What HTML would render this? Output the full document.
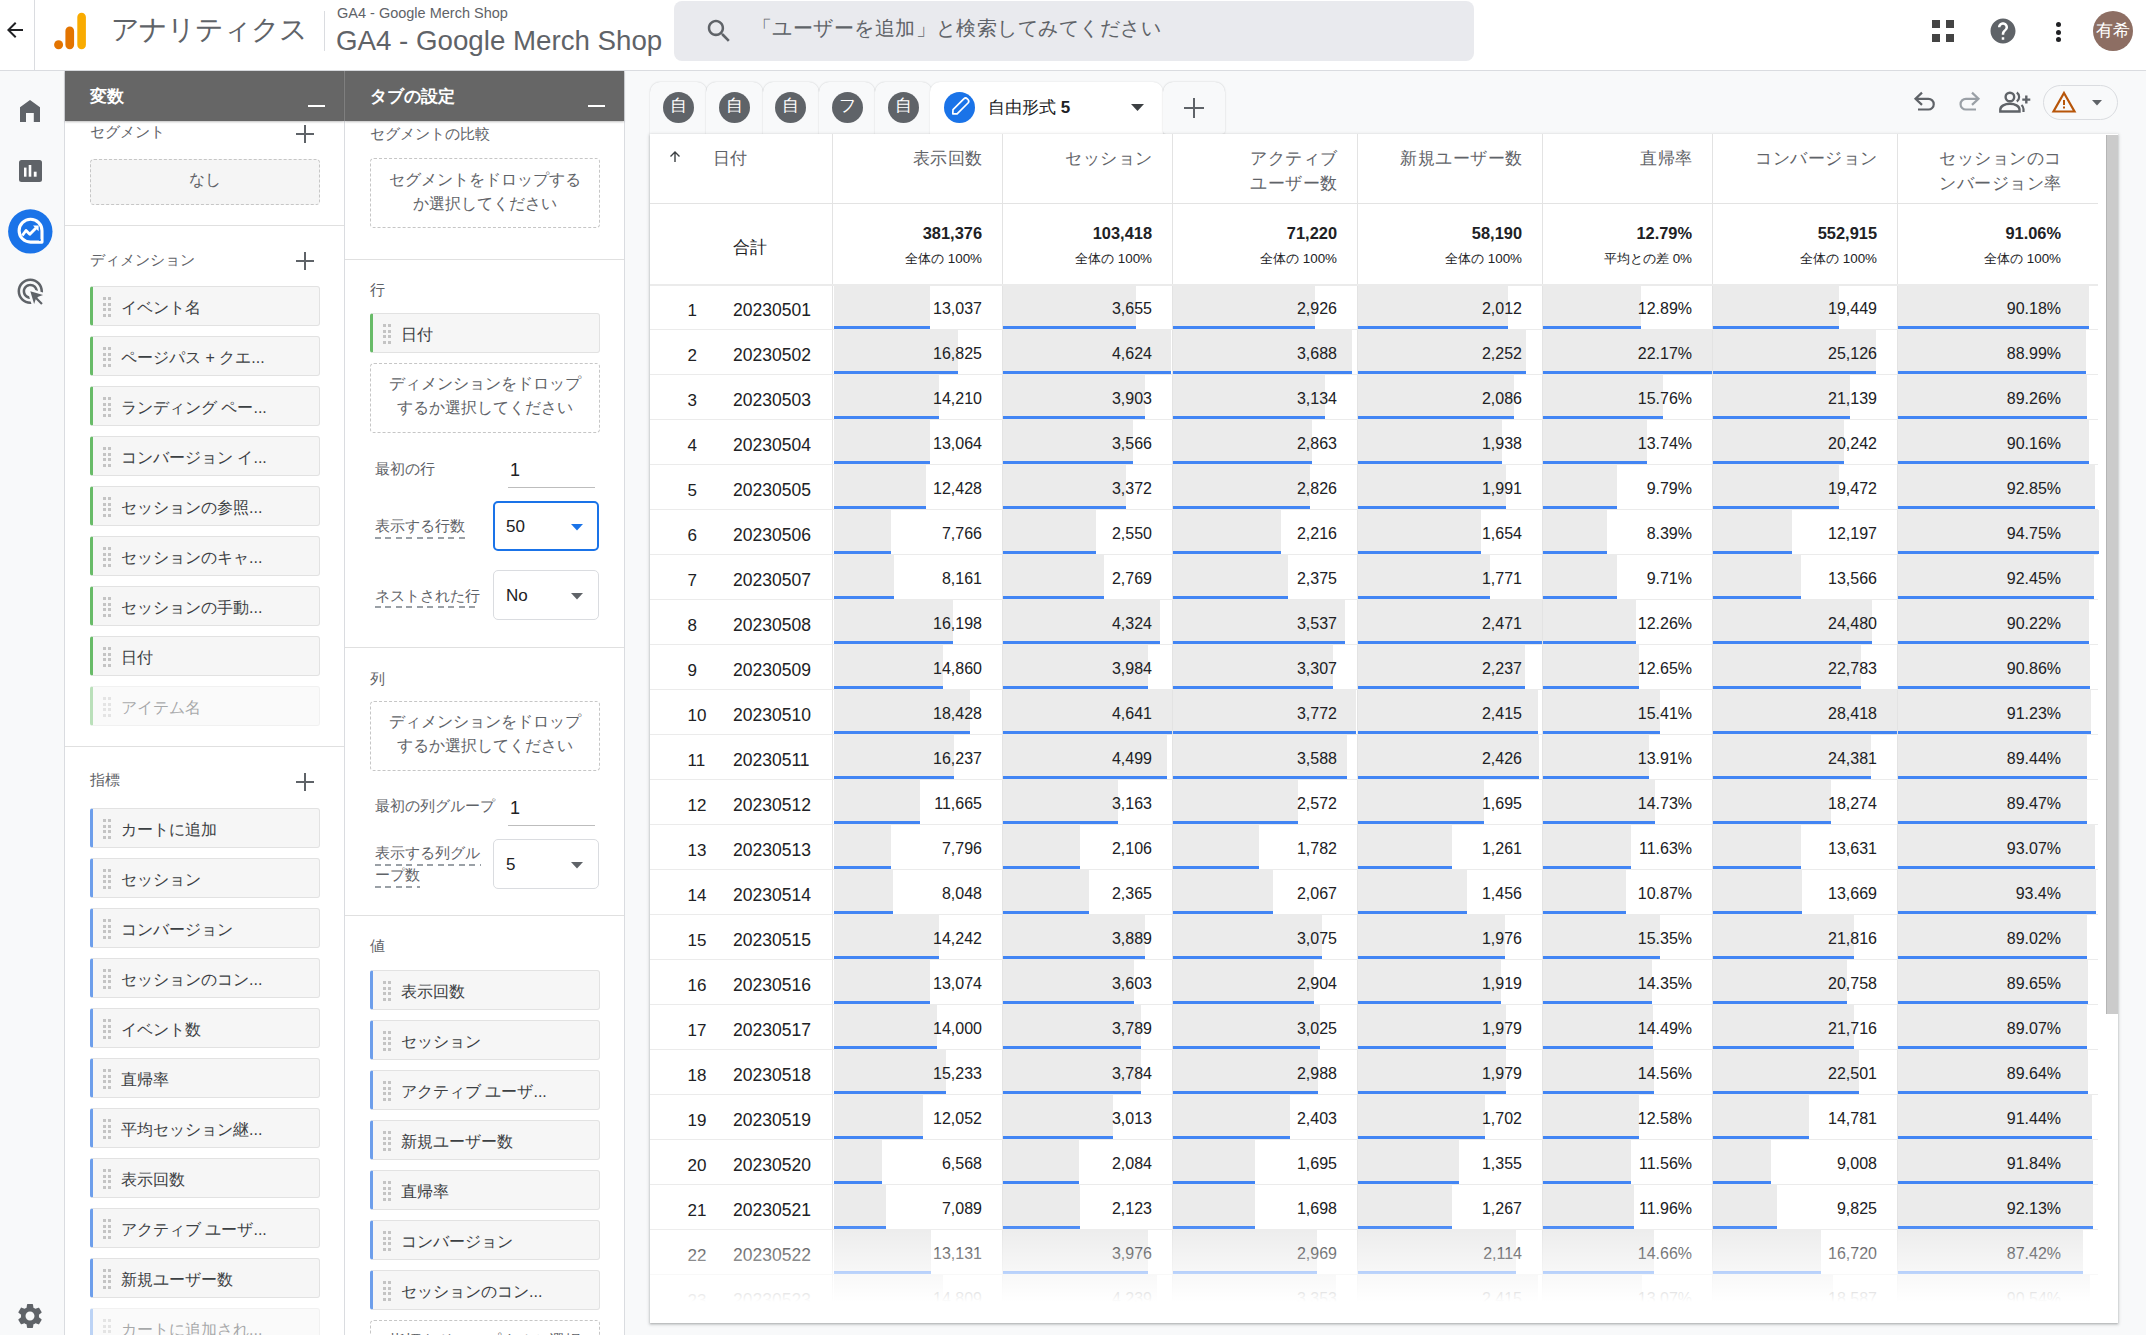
<!DOCTYPE html><html lang="ja"><head><meta charset="utf-8"><title>GA4</title><style>
*{box-sizing:border-box;margin:0;padding:0}
html,body{width:2146px;height:1335px;overflow:hidden}
body{background:#f8f9fa;font-family:"Liberation Sans",sans-serif;position:relative;color:#202124}
.a{position:absolute}
.t{position:absolute;white-space:nowrap;line-height:1}
svg{position:absolute;overflow:visible}
</style></head><body>
<div class="a" style="left:0;top:0;width:2146px;height:71px;background:#fff;border-bottom:1px solid #dadce0"></div>
<div class="a" style="left:34px;top:0;width:1px;height:70px;background:#dadce0"></div>
<svg style="left:3px;top:18px" width="24" height="24" viewBox="0 0 24 24"><path fill="#202124" d="M20 11H7.83l5.59-5.59L12 4l-8 8 8 8 1.41-1.41L7.83 13H20v-2z"/></svg>
<svg style="left:0;top:0" width="100" height="70"><circle cx="58.6" cy="44.8" r="4.5" fill="#e37400"/><rect x="65.4" y="26.6" width="8.7" height="22.6" rx="4.35" fill="#e37400"/><rect x="77.3" y="12.7" width="8.6" height="36.5" rx="4.3" fill="#f9ab00"/></svg>
<div class="t" style="left:111px;top:16px;font-size:28px;letter-spacing:-1px;color:#5f6368">アナリティクス</div>
<div class="a" style="left:324px;top:11px;width:1px;height:40px;background:#dadce0"></div>
<div class="t" style="left:337px;top:5.5px;font-size:14.5px;color:#5f6368">GA4 - Google Merch Shop</div>
<div class="t" style="left:336px;top:27.3px;font-size:27.7px;color:#5f6368">GA4 - Google Merch Shop</div>
<div class="a" style="left:674px;top:1px;width:800px;height:60px;border-radius:8px;background:#e9eaee"></div>
<svg style="left:703.7px;top:16.1px" width="30.2" height="30.2" viewBox="0 0 24 24"><path fill="#5f6368" d="M15.5 14h-.79l-.28-.27C15.41 12.59 16 11.11 16 9.5 16 5.91 13.09 3 9.5 3S3 5.91 3 9.5 5.91 16 9.5 16c1.61 0 3.09-.59 4.23-1.57l.27.28v.79l5 4.99L20.49 19l-4.99-5zm-6 0C7.01 14 5 11.99 5 9.5S7.01 5 9.5 5 14 7.01 14 9.5 11.99 14 9.5 14z"/></svg>
<div class="t" style="left:752px;top:18px;font-size:20px;letter-spacing:0.45px;color:#5f6368">「ユーザーを追加」と検索してみてください</div>
<div class="a" style="left:1932px;top:20px;width:8px;height:8px;background:#444"></div>
<div class="a" style="left:1946px;top:20px;width:8px;height:8px;background:#444"></div>
<div class="a" style="left:1932px;top:34px;width:8px;height:8px;background:#444"></div>
<div class="a" style="left:1946px;top:34px;width:8px;height:8px;background:#444"></div>
<svg style="left:1988px;top:16px" width="30" height="30" viewBox="0 0 24 24"><path fill="#5f6368" d="M12 2C6.48 2 2 6.48 2 12s4.48 10 10 10 10-4.48 10-10S17.52 2 12 2zm1 17h-2v-2h2v2zm2.07-7.750l-.9.92C13.45 12.9 13 13.5 13 15h-2v-.5c0-1.1.45-2.1 1.17-2.83l1.24-1.26c.37-.36.59-.86.59-1.41 0-1.1-.9-2-2-2s-2 .9-2 2H8c0-2.21 1.79-4 4-4s4 1.79 4 4c0 .88-.36 1.68-.93 2.25z"/></svg>
<div class="a" style="left:2055.5px;top:22.0px;width:5px;height:5px;border-radius:50%;background:#202124"></div>
<div class="a" style="left:2055.5px;top:29.5px;width:5px;height:5px;border-radius:50%;background:#202124"></div>
<div class="a" style="left:2055.5px;top:37.0px;width:5px;height:5px;border-radius:50%;background:#202124"></div>
<div class="a" style="left:2093px;top:11px;width:40px;height:40px;border-radius:50%;background:#8d6e63"></div>
<div class="t" style="left:2093px;top:22px;width:40px;text-align:center;font-size:17px;color:#fff">有希</div>
<svg style="left:0;top:0" width="64" height="1335"><path fill="#5f6368" d="M20 107.3L30 100L40 107.3V122H33.8V113H26V122H20Z"/><rect x="19" y="160" width="23" height="22" rx="2.5" fill="#5f6368"/><rect x="24" y="167.6" width="2.5" height="9.1" fill="#fff"/><rect x="28.7" y="165" width="2.6" height="11.7" fill="#fff"/><rect x="33.8" y="171.7" width="2.8" height="5" fill="#fff"/><circle cx="30.3" cy="231.4" r="22.2" fill="#1a73e8"/><path fill="none" stroke="#fff" stroke-width="3.1" stroke-linejoin="round" d="M42 230.7A11.4 11.4 0 0 0 30.5 219.3A11.4 11.4 0 0 0 19.1 230.7A11.4 11.4 0 0 0 30.5 242.1H42Z"/><circle cx="39.8" cy="240" r="1" fill="#1a73e8"/><path fill="none" stroke="#fff" stroke-width="2.9" stroke-linejoin="round" d="M22.3 235.5L26 230.5L29.8 234.2L36 228"/><path fill="#fff" d="M33 225.6H38.6V231.2Z"/></svg>
<svg style="left:14.85px;top:275.75px" width="30.6" height="30.6" viewBox="0 0 24 24"><path fill="#5f6368" d="M11.71 17.99C8.53 17.84 6 15.22 6 12c0-3.310 2.69-6 6-6 3.22 0 5.84 2.53 5.990 5.71l-2.1-.63C15.48 9.31 13.89 8 12 8c-2.21 0-4 1.79-4 4 0 1.89 1.31 3.48 3.08 3.89l.63 2.1zM22 12c0 .3-.01.6-.04.9l-1.97-.59c.01-.1.01-.21.01-.31 0-4.42-3.58-8-8-8s-8 3.58-8 8 3.58 8 8 8c.1 0 .21 0 .31-.01l.59 1.97c-.3.03-.6.04-.9.04-5.52 0-10-4.48-10-10S6.48 2 12 2s10 4.48 10 10zm-3.76 4.26L22 15l-10-3 3 10 1.26-3.76 4.270 4.27 1.22-1.22-4.27-4.27z"/></svg>
<svg style="left:15px;top:1300.5px" width="30" height="30" viewBox="0 0 24 24"><path fill="#5f6368" d="M19.14 12.94c.04-.3.06-.61.06-.94 0-.32-.02-.64-.07-.94l2.03-1.58c.18-.14.23-.41.12-.61l-1.92-3.32c-.12-.22-.37-.29-.59-.22l-2.39.96c-.5-.38-1.03-.7-1.62-.94l-.36-2.54c-.04-.24-.24-.41-.48-.41h-3.84c-.24 0-.43.17-.47.41l-.36 2.54c-.59.24-1.13.57-1.62.94l-2.39-.96c-.22-.08-.47 0-.59.22L2.74 8.87c-.12.21-.08.47.12.61l2.03 1.58c-.05.3-.09.63-.09.94s.02.64.07.94l-2.03 1.58c-.18.14-.23.41-.12.61l1.92 3.32c.12.22.37.29.59.22l2.39-.96c.5.38 1.03.7 1.62.94l.36 2.54c.05.24.24.41.48.41h3.84c.24 0 .44-.17.47-.41l.36-2.54c.59-.24 1.13-.56 1.62-.94l2.39.96c.22.08.47 0 .59-.22l1.92-3.32c.12-.22.07-.47-.12-.61l-2.01-1.58zM12 15.6c-1.98 0-3.6-1.62-3.6-3.6s1.62-3.6 3.6-3.6 3.6 1.62 3.6 3.6-1.62 3.6-3.6 3.6z"/></svg>
<div class="a" style="left:64px;top:71px;width:281px;height:1264px;background:#fff;border-left:1px solid #dadce0;border-right:1px solid #dadce0"></div>
<div class="a" style="left:345px;top:71px;width:280px;height:1264px;background:#fff;border-right:1px solid #dadce0"></div>
<div class="a" style="left:65px;top:71px;width:279px;height:50px;background:#666;box-shadow:0 1px 2px rgba(0,0,0,.25)"></div>
<div class="a" style="left:344px;top:71px;width:1px;height:50px;background:#8a8a8a"></div>
<div class="a" style="left:345px;top:71px;width:279px;height:50px;background:#666;box-shadow:0 1px 2px rgba(0,0,0,.25)"></div>
<div class="t" style="left:90px;top:88px;font-size:17px;font-weight:bold;color:#fff">変数</div>
<div class="t" style="left:370px;top:88px;font-size:17px;font-weight:bold;color:#fff">タブの設定</div>
<div class="a" style="left:308px;top:105px;width:17px;height:2px;background:#fff"></div>
<div class="a" style="left:588px;top:105px;width:17px;height:2px;background:#fff"></div>
<div class="t" style="left:90px;top:124px;font-size:15px;color:#5f6368">セグメント</div>
<div class="a" style="left:296px;top:133px;width:18px;height:2px;background:#5f6368"></div>
<div class="a" style="left:304px;top:125px;width:2px;height:18px;background:#5f6368"></div>
<div class="a" style="left:90px;top:159px;width:230px;height:46px;background:#f5f5f5;border:1px dashed #c6c6c6;border-radius:4px"></div>
<div class="t" style="left:90px;top:172px;width:230px;text-align:center;font-size:16px;color:#5f6368">なし</div>
<div class="a" style="left:65px;top:225px;width:279px;height:1px;background:#e0e0e0"></div>
<div class="t" style="left:90px;top:252px;font-size:15px;color:#5f6368">ディメンション</div>
<div class="a" style="left:296px;top:260px;width:18px;height:2px;background:#5f6368"></div>
<div class="a" style="left:304px;top:252px;width:2px;height:18px;background:#5f6368"></div>
<div class="a" style="left:90px;top:286px;width:230px;height:40px;"><div class="a" style="left:0;top:0;width:230px;height:40px;background:#f6f6f6;border:1px solid #e2e2e2;border-left:3px solid #68bb68;border-radius:3px"></div><div class="a" style="left:12.5px;top:11px;width:3px;height:3px;background:#c4c4c4"></div><div class="a" style="left:12.5px;top:16.7px;width:3px;height:3px;background:#c4c4c4"></div><div class="a" style="left:12.5px;top:22.3px;width:3px;height:3px;background:#c4c4c4"></div><div class="a" style="left:12.5px;top:28px;width:3px;height:3px;background:#c4c4c4"></div><div class="a" style="left:18px;top:11px;width:3px;height:3px;background:#c4c4c4"></div><div class="a" style="left:18px;top:16.7px;width:3px;height:3px;background:#c4c4c4"></div><div class="a" style="left:18px;top:22.3px;width:3px;height:3px;background:#c4c4c4"></div><div class="a" style="left:18px;top:28px;width:3px;height:3px;background:#c4c4c4"></div><div class="t" style="left:31px;top:14px;font-size:16px;color:#3c4043">イベント名</div></div>
<div class="a" style="left:90px;top:336px;width:230px;height:40px;"><div class="a" style="left:0;top:0;width:230px;height:40px;background:#f6f6f6;border:1px solid #e2e2e2;border-left:3px solid #68bb68;border-radius:3px"></div><div class="a" style="left:12.5px;top:11px;width:3px;height:3px;background:#c4c4c4"></div><div class="a" style="left:12.5px;top:16.7px;width:3px;height:3px;background:#c4c4c4"></div><div class="a" style="left:12.5px;top:22.3px;width:3px;height:3px;background:#c4c4c4"></div><div class="a" style="left:12.5px;top:28px;width:3px;height:3px;background:#c4c4c4"></div><div class="a" style="left:18px;top:11px;width:3px;height:3px;background:#c4c4c4"></div><div class="a" style="left:18px;top:16.7px;width:3px;height:3px;background:#c4c4c4"></div><div class="a" style="left:18px;top:22.3px;width:3px;height:3px;background:#c4c4c4"></div><div class="a" style="left:18px;top:28px;width:3px;height:3px;background:#c4c4c4"></div><div class="t" style="left:31px;top:14px;font-size:16px;color:#3c4043">ページパス + クエ...</div></div>
<div class="a" style="left:90px;top:386px;width:230px;height:40px;"><div class="a" style="left:0;top:0;width:230px;height:40px;background:#f6f6f6;border:1px solid #e2e2e2;border-left:3px solid #68bb68;border-radius:3px"></div><div class="a" style="left:12.5px;top:11px;width:3px;height:3px;background:#c4c4c4"></div><div class="a" style="left:12.5px;top:16.7px;width:3px;height:3px;background:#c4c4c4"></div><div class="a" style="left:12.5px;top:22.3px;width:3px;height:3px;background:#c4c4c4"></div><div class="a" style="left:12.5px;top:28px;width:3px;height:3px;background:#c4c4c4"></div><div class="a" style="left:18px;top:11px;width:3px;height:3px;background:#c4c4c4"></div><div class="a" style="left:18px;top:16.7px;width:3px;height:3px;background:#c4c4c4"></div><div class="a" style="left:18px;top:22.3px;width:3px;height:3px;background:#c4c4c4"></div><div class="a" style="left:18px;top:28px;width:3px;height:3px;background:#c4c4c4"></div><div class="t" style="left:31px;top:14px;font-size:16px;color:#3c4043">ランディング ペー...</div></div>
<div class="a" style="left:90px;top:436px;width:230px;height:40px;"><div class="a" style="left:0;top:0;width:230px;height:40px;background:#f6f6f6;border:1px solid #e2e2e2;border-left:3px solid #68bb68;border-radius:3px"></div><div class="a" style="left:12.5px;top:11px;width:3px;height:3px;background:#c4c4c4"></div><div class="a" style="left:12.5px;top:16.7px;width:3px;height:3px;background:#c4c4c4"></div><div class="a" style="left:12.5px;top:22.3px;width:3px;height:3px;background:#c4c4c4"></div><div class="a" style="left:12.5px;top:28px;width:3px;height:3px;background:#c4c4c4"></div><div class="a" style="left:18px;top:11px;width:3px;height:3px;background:#c4c4c4"></div><div class="a" style="left:18px;top:16.7px;width:3px;height:3px;background:#c4c4c4"></div><div class="a" style="left:18px;top:22.3px;width:3px;height:3px;background:#c4c4c4"></div><div class="a" style="left:18px;top:28px;width:3px;height:3px;background:#c4c4c4"></div><div class="t" style="left:31px;top:14px;font-size:16px;color:#3c4043">コンバージョン イ...</div></div>
<div class="a" style="left:90px;top:486px;width:230px;height:40px;"><div class="a" style="left:0;top:0;width:230px;height:40px;background:#f6f6f6;border:1px solid #e2e2e2;border-left:3px solid #68bb68;border-radius:3px"></div><div class="a" style="left:12.5px;top:11px;width:3px;height:3px;background:#c4c4c4"></div><div class="a" style="left:12.5px;top:16.7px;width:3px;height:3px;background:#c4c4c4"></div><div class="a" style="left:12.5px;top:22.3px;width:3px;height:3px;background:#c4c4c4"></div><div class="a" style="left:12.5px;top:28px;width:3px;height:3px;background:#c4c4c4"></div><div class="a" style="left:18px;top:11px;width:3px;height:3px;background:#c4c4c4"></div><div class="a" style="left:18px;top:16.7px;width:3px;height:3px;background:#c4c4c4"></div><div class="a" style="left:18px;top:22.3px;width:3px;height:3px;background:#c4c4c4"></div><div class="a" style="left:18px;top:28px;width:3px;height:3px;background:#c4c4c4"></div><div class="t" style="left:31px;top:14px;font-size:16px;color:#3c4043">セッションの参照...</div></div>
<div class="a" style="left:90px;top:536px;width:230px;height:40px;"><div class="a" style="left:0;top:0;width:230px;height:40px;background:#f6f6f6;border:1px solid #e2e2e2;border-left:3px solid #68bb68;border-radius:3px"></div><div class="a" style="left:12.5px;top:11px;width:3px;height:3px;background:#c4c4c4"></div><div class="a" style="left:12.5px;top:16.7px;width:3px;height:3px;background:#c4c4c4"></div><div class="a" style="left:12.5px;top:22.3px;width:3px;height:3px;background:#c4c4c4"></div><div class="a" style="left:12.5px;top:28px;width:3px;height:3px;background:#c4c4c4"></div><div class="a" style="left:18px;top:11px;width:3px;height:3px;background:#c4c4c4"></div><div class="a" style="left:18px;top:16.7px;width:3px;height:3px;background:#c4c4c4"></div><div class="a" style="left:18px;top:22.3px;width:3px;height:3px;background:#c4c4c4"></div><div class="a" style="left:18px;top:28px;width:3px;height:3px;background:#c4c4c4"></div><div class="t" style="left:31px;top:14px;font-size:16px;color:#3c4043">セッションのキャ...</div></div>
<div class="a" style="left:90px;top:586px;width:230px;height:40px;"><div class="a" style="left:0;top:0;width:230px;height:40px;background:#f6f6f6;border:1px solid #e2e2e2;border-left:3px solid #68bb68;border-radius:3px"></div><div class="a" style="left:12.5px;top:11px;width:3px;height:3px;background:#c4c4c4"></div><div class="a" style="left:12.5px;top:16.7px;width:3px;height:3px;background:#c4c4c4"></div><div class="a" style="left:12.5px;top:22.3px;width:3px;height:3px;background:#c4c4c4"></div><div class="a" style="left:12.5px;top:28px;width:3px;height:3px;background:#c4c4c4"></div><div class="a" style="left:18px;top:11px;width:3px;height:3px;background:#c4c4c4"></div><div class="a" style="left:18px;top:16.7px;width:3px;height:3px;background:#c4c4c4"></div><div class="a" style="left:18px;top:22.3px;width:3px;height:3px;background:#c4c4c4"></div><div class="a" style="left:18px;top:28px;width:3px;height:3px;background:#c4c4c4"></div><div class="t" style="left:31px;top:14px;font-size:16px;color:#3c4043">セッションの手動...</div></div>
<div class="a" style="left:90px;top:636px;width:230px;height:40px;"><div class="a" style="left:0;top:0;width:230px;height:40px;background:#f6f6f6;border:1px solid #e2e2e2;border-left:3px solid #68bb68;border-radius:3px"></div><div class="a" style="left:12.5px;top:11px;width:3px;height:3px;background:#c4c4c4"></div><div class="a" style="left:12.5px;top:16.7px;width:3px;height:3px;background:#c4c4c4"></div><div class="a" style="left:12.5px;top:22.3px;width:3px;height:3px;background:#c4c4c4"></div><div class="a" style="left:12.5px;top:28px;width:3px;height:3px;background:#c4c4c4"></div><div class="a" style="left:18px;top:11px;width:3px;height:3px;background:#c4c4c4"></div><div class="a" style="left:18px;top:16.7px;width:3px;height:3px;background:#c4c4c4"></div><div class="a" style="left:18px;top:22.3px;width:3px;height:3px;background:#c4c4c4"></div><div class="a" style="left:18px;top:28px;width:3px;height:3px;background:#c4c4c4"></div><div class="t" style="left:31px;top:14px;font-size:16px;color:#3c4043">日付</div></div>
<div class="a" style="left:90px;top:686px;width:230px;height:40px;opacity:0.45;"><div class="a" style="left:0;top:0;width:230px;height:40px;background:#f6f6f6;border:1px solid #e2e2e2;border-left:3px solid #68bb68;border-radius:3px"></div><div class="a" style="left:12.5px;top:11px;width:3px;height:3px;background:#c4c4c4"></div><div class="a" style="left:12.5px;top:16.7px;width:3px;height:3px;background:#c4c4c4"></div><div class="a" style="left:12.5px;top:22.3px;width:3px;height:3px;background:#c4c4c4"></div><div class="a" style="left:12.5px;top:28px;width:3px;height:3px;background:#c4c4c4"></div><div class="a" style="left:18px;top:11px;width:3px;height:3px;background:#c4c4c4"></div><div class="a" style="left:18px;top:16.7px;width:3px;height:3px;background:#c4c4c4"></div><div class="a" style="left:18px;top:22.3px;width:3px;height:3px;background:#c4c4c4"></div><div class="a" style="left:18px;top:28px;width:3px;height:3px;background:#c4c4c4"></div><div class="t" style="left:31px;top:14px;font-size:16px;color:#3c4043">アイテム名</div></div>
<div class="a" style="left:65px;top:746px;width:279px;height:1px;background:#e0e0e0"></div>
<div class="t" style="left:90px;top:772px;font-size:15px;color:#5f6368">指標</div>
<div class="a" style="left:296px;top:781px;width:18px;height:2px;background:#5f6368"></div>
<div class="a" style="left:304px;top:773px;width:2px;height:18px;background:#5f6368"></div>
<div class="a" style="left:90px;top:808px;width:230px;height:40px;"><div class="a" style="left:0;top:0;width:230px;height:40px;background:#f6f6f6;border:1px solid #e2e2e2;border-left:3px solid #6d9eeb;border-radius:3px"></div><div class="a" style="left:12.5px;top:11px;width:3px;height:3px;background:#c4c4c4"></div><div class="a" style="left:12.5px;top:16.7px;width:3px;height:3px;background:#c4c4c4"></div><div class="a" style="left:12.5px;top:22.3px;width:3px;height:3px;background:#c4c4c4"></div><div class="a" style="left:12.5px;top:28px;width:3px;height:3px;background:#c4c4c4"></div><div class="a" style="left:18px;top:11px;width:3px;height:3px;background:#c4c4c4"></div><div class="a" style="left:18px;top:16.7px;width:3px;height:3px;background:#c4c4c4"></div><div class="a" style="left:18px;top:22.3px;width:3px;height:3px;background:#c4c4c4"></div><div class="a" style="left:18px;top:28px;width:3px;height:3px;background:#c4c4c4"></div><div class="t" style="left:31px;top:14px;font-size:16px;color:#3c4043">カートに追加</div></div>
<div class="a" style="left:90px;top:858px;width:230px;height:40px;"><div class="a" style="left:0;top:0;width:230px;height:40px;background:#f6f6f6;border:1px solid #e2e2e2;border-left:3px solid #6d9eeb;border-radius:3px"></div><div class="a" style="left:12.5px;top:11px;width:3px;height:3px;background:#c4c4c4"></div><div class="a" style="left:12.5px;top:16.7px;width:3px;height:3px;background:#c4c4c4"></div><div class="a" style="left:12.5px;top:22.3px;width:3px;height:3px;background:#c4c4c4"></div><div class="a" style="left:12.5px;top:28px;width:3px;height:3px;background:#c4c4c4"></div><div class="a" style="left:18px;top:11px;width:3px;height:3px;background:#c4c4c4"></div><div class="a" style="left:18px;top:16.7px;width:3px;height:3px;background:#c4c4c4"></div><div class="a" style="left:18px;top:22.3px;width:3px;height:3px;background:#c4c4c4"></div><div class="a" style="left:18px;top:28px;width:3px;height:3px;background:#c4c4c4"></div><div class="t" style="left:31px;top:14px;font-size:16px;color:#3c4043">セッション</div></div>
<div class="a" style="left:90px;top:908px;width:230px;height:40px;"><div class="a" style="left:0;top:0;width:230px;height:40px;background:#f6f6f6;border:1px solid #e2e2e2;border-left:3px solid #6d9eeb;border-radius:3px"></div><div class="a" style="left:12.5px;top:11px;width:3px;height:3px;background:#c4c4c4"></div><div class="a" style="left:12.5px;top:16.7px;width:3px;height:3px;background:#c4c4c4"></div><div class="a" style="left:12.5px;top:22.3px;width:3px;height:3px;background:#c4c4c4"></div><div class="a" style="left:12.5px;top:28px;width:3px;height:3px;background:#c4c4c4"></div><div class="a" style="left:18px;top:11px;width:3px;height:3px;background:#c4c4c4"></div><div class="a" style="left:18px;top:16.7px;width:3px;height:3px;background:#c4c4c4"></div><div class="a" style="left:18px;top:22.3px;width:3px;height:3px;background:#c4c4c4"></div><div class="a" style="left:18px;top:28px;width:3px;height:3px;background:#c4c4c4"></div><div class="t" style="left:31px;top:14px;font-size:16px;color:#3c4043">コンバージョン</div></div>
<div class="a" style="left:90px;top:958px;width:230px;height:40px;"><div class="a" style="left:0;top:0;width:230px;height:40px;background:#f6f6f6;border:1px solid #e2e2e2;border-left:3px solid #6d9eeb;border-radius:3px"></div><div class="a" style="left:12.5px;top:11px;width:3px;height:3px;background:#c4c4c4"></div><div class="a" style="left:12.5px;top:16.7px;width:3px;height:3px;background:#c4c4c4"></div><div class="a" style="left:12.5px;top:22.3px;width:3px;height:3px;background:#c4c4c4"></div><div class="a" style="left:12.5px;top:28px;width:3px;height:3px;background:#c4c4c4"></div><div class="a" style="left:18px;top:11px;width:3px;height:3px;background:#c4c4c4"></div><div class="a" style="left:18px;top:16.7px;width:3px;height:3px;background:#c4c4c4"></div><div class="a" style="left:18px;top:22.3px;width:3px;height:3px;background:#c4c4c4"></div><div class="a" style="left:18px;top:28px;width:3px;height:3px;background:#c4c4c4"></div><div class="t" style="left:31px;top:14px;font-size:16px;color:#3c4043">セッションのコン...</div></div>
<div class="a" style="left:90px;top:1008px;width:230px;height:40px;"><div class="a" style="left:0;top:0;width:230px;height:40px;background:#f6f6f6;border:1px solid #e2e2e2;border-left:3px solid #6d9eeb;border-radius:3px"></div><div class="a" style="left:12.5px;top:11px;width:3px;height:3px;background:#c4c4c4"></div><div class="a" style="left:12.5px;top:16.7px;width:3px;height:3px;background:#c4c4c4"></div><div class="a" style="left:12.5px;top:22.3px;width:3px;height:3px;background:#c4c4c4"></div><div class="a" style="left:12.5px;top:28px;width:3px;height:3px;background:#c4c4c4"></div><div class="a" style="left:18px;top:11px;width:3px;height:3px;background:#c4c4c4"></div><div class="a" style="left:18px;top:16.7px;width:3px;height:3px;background:#c4c4c4"></div><div class="a" style="left:18px;top:22.3px;width:3px;height:3px;background:#c4c4c4"></div><div class="a" style="left:18px;top:28px;width:3px;height:3px;background:#c4c4c4"></div><div class="t" style="left:31px;top:14px;font-size:16px;color:#3c4043">イベント数</div></div>
<div class="a" style="left:90px;top:1058px;width:230px;height:40px;"><div class="a" style="left:0;top:0;width:230px;height:40px;background:#f6f6f6;border:1px solid #e2e2e2;border-left:3px solid #6d9eeb;border-radius:3px"></div><div class="a" style="left:12.5px;top:11px;width:3px;height:3px;background:#c4c4c4"></div><div class="a" style="left:12.5px;top:16.7px;width:3px;height:3px;background:#c4c4c4"></div><div class="a" style="left:12.5px;top:22.3px;width:3px;height:3px;background:#c4c4c4"></div><div class="a" style="left:12.5px;top:28px;width:3px;height:3px;background:#c4c4c4"></div><div class="a" style="left:18px;top:11px;width:3px;height:3px;background:#c4c4c4"></div><div class="a" style="left:18px;top:16.7px;width:3px;height:3px;background:#c4c4c4"></div><div class="a" style="left:18px;top:22.3px;width:3px;height:3px;background:#c4c4c4"></div><div class="a" style="left:18px;top:28px;width:3px;height:3px;background:#c4c4c4"></div><div class="t" style="left:31px;top:14px;font-size:16px;color:#3c4043">直帰率</div></div>
<div class="a" style="left:90px;top:1108px;width:230px;height:40px;"><div class="a" style="left:0;top:0;width:230px;height:40px;background:#f6f6f6;border:1px solid #e2e2e2;border-left:3px solid #6d9eeb;border-radius:3px"></div><div class="a" style="left:12.5px;top:11px;width:3px;height:3px;background:#c4c4c4"></div><div class="a" style="left:12.5px;top:16.7px;width:3px;height:3px;background:#c4c4c4"></div><div class="a" style="left:12.5px;top:22.3px;width:3px;height:3px;background:#c4c4c4"></div><div class="a" style="left:12.5px;top:28px;width:3px;height:3px;background:#c4c4c4"></div><div class="a" style="left:18px;top:11px;width:3px;height:3px;background:#c4c4c4"></div><div class="a" style="left:18px;top:16.7px;width:3px;height:3px;background:#c4c4c4"></div><div class="a" style="left:18px;top:22.3px;width:3px;height:3px;background:#c4c4c4"></div><div class="a" style="left:18px;top:28px;width:3px;height:3px;background:#c4c4c4"></div><div class="t" style="left:31px;top:14px;font-size:16px;color:#3c4043">平均セッション継...</div></div>
<div class="a" style="left:90px;top:1158px;width:230px;height:40px;"><div class="a" style="left:0;top:0;width:230px;height:40px;background:#f6f6f6;border:1px solid #e2e2e2;border-left:3px solid #6d9eeb;border-radius:3px"></div><div class="a" style="left:12.5px;top:11px;width:3px;height:3px;background:#c4c4c4"></div><div class="a" style="left:12.5px;top:16.7px;width:3px;height:3px;background:#c4c4c4"></div><div class="a" style="left:12.5px;top:22.3px;width:3px;height:3px;background:#c4c4c4"></div><div class="a" style="left:12.5px;top:28px;width:3px;height:3px;background:#c4c4c4"></div><div class="a" style="left:18px;top:11px;width:3px;height:3px;background:#c4c4c4"></div><div class="a" style="left:18px;top:16.7px;width:3px;height:3px;background:#c4c4c4"></div><div class="a" style="left:18px;top:22.3px;width:3px;height:3px;background:#c4c4c4"></div><div class="a" style="left:18px;top:28px;width:3px;height:3px;background:#c4c4c4"></div><div class="t" style="left:31px;top:14px;font-size:16px;color:#3c4043">表示回数</div></div>
<div class="a" style="left:90px;top:1208px;width:230px;height:40px;"><div class="a" style="left:0;top:0;width:230px;height:40px;background:#f6f6f6;border:1px solid #e2e2e2;border-left:3px solid #6d9eeb;border-radius:3px"></div><div class="a" style="left:12.5px;top:11px;width:3px;height:3px;background:#c4c4c4"></div><div class="a" style="left:12.5px;top:16.7px;width:3px;height:3px;background:#c4c4c4"></div><div class="a" style="left:12.5px;top:22.3px;width:3px;height:3px;background:#c4c4c4"></div><div class="a" style="left:12.5px;top:28px;width:3px;height:3px;background:#c4c4c4"></div><div class="a" style="left:18px;top:11px;width:3px;height:3px;background:#c4c4c4"></div><div class="a" style="left:18px;top:16.7px;width:3px;height:3px;background:#c4c4c4"></div><div class="a" style="left:18px;top:22.3px;width:3px;height:3px;background:#c4c4c4"></div><div class="a" style="left:18px;top:28px;width:3px;height:3px;background:#c4c4c4"></div><div class="t" style="left:31px;top:14px;font-size:16px;color:#3c4043">アクティブ ユーザ...</div></div>
<div class="a" style="left:90px;top:1258px;width:230px;height:40px;"><div class="a" style="left:0;top:0;width:230px;height:40px;background:#f6f6f6;border:1px solid #e2e2e2;border-left:3px solid #6d9eeb;border-radius:3px"></div><div class="a" style="left:12.5px;top:11px;width:3px;height:3px;background:#c4c4c4"></div><div class="a" style="left:12.5px;top:16.7px;width:3px;height:3px;background:#c4c4c4"></div><div class="a" style="left:12.5px;top:22.3px;width:3px;height:3px;background:#c4c4c4"></div><div class="a" style="left:12.5px;top:28px;width:3px;height:3px;background:#c4c4c4"></div><div class="a" style="left:18px;top:11px;width:3px;height:3px;background:#c4c4c4"></div><div class="a" style="left:18px;top:16.7px;width:3px;height:3px;background:#c4c4c4"></div><div class="a" style="left:18px;top:22.3px;width:3px;height:3px;background:#c4c4c4"></div><div class="a" style="left:18px;top:28px;width:3px;height:3px;background:#c4c4c4"></div><div class="t" style="left:31px;top:14px;font-size:16px;color:#3c4043">新規ユーザー数</div></div>
<div class="a" style="left:90px;top:1308px;width:230px;height:40px;opacity:0.45;"><div class="a" style="left:0;top:0;width:230px;height:40px;background:#f6f6f6;border:1px solid #e2e2e2;border-left:3px solid #6d9eeb;border-radius:3px"></div><div class="a" style="left:12.5px;top:11px;width:3px;height:3px;background:#c4c4c4"></div><div class="a" style="left:12.5px;top:16.7px;width:3px;height:3px;background:#c4c4c4"></div><div class="a" style="left:12.5px;top:22.3px;width:3px;height:3px;background:#c4c4c4"></div><div class="a" style="left:12.5px;top:28px;width:3px;height:3px;background:#c4c4c4"></div><div class="a" style="left:18px;top:11px;width:3px;height:3px;background:#c4c4c4"></div><div class="a" style="left:18px;top:16.7px;width:3px;height:3px;background:#c4c4c4"></div><div class="a" style="left:18px;top:22.3px;width:3px;height:3px;background:#c4c4c4"></div><div class="a" style="left:18px;top:28px;width:3px;height:3px;background:#c4c4c4"></div><div class="t" style="left:31px;top:14px;font-size:16px;color:#3c4043">カートに追加され...</div></div>
<div class="t" style="left:370px;top:126px;font-size:15px;color:#5f6368">セグメントの比較</div>
<div class="a" style="left:370px;top:158px;width:230px;height:70px;background:#fff;border:1px dashed #c6c6c6;border-radius:4px"></div>
<div class="t" style="left:370px;top:172px;width:230px;text-align:center;font-size:16px;color:#5f6368">セグメントをドロップする</div>
<div class="t" style="left:370px;top:196px;width:230px;text-align:center;font-size:16px;color:#5f6368">か選択してください</div>
<div class="a" style="left:345px;top:259px;width:279px;height:1px;background:#e0e0e0"></div>
<div class="t" style="left:370px;top:282px;font-size:15px;color:#5f6368">行</div>
<div class="a" style="left:370px;top:313px;width:230px;height:40px;"><div class="a" style="left:0;top:0;width:230px;height:40px;background:#f6f6f6;border:1px solid #e2e2e2;border-left:3px solid #68bb68;border-radius:3px"></div><div class="a" style="left:12.5px;top:11px;width:3px;height:3px;background:#c4c4c4"></div><div class="a" style="left:12.5px;top:16.7px;width:3px;height:3px;background:#c4c4c4"></div><div class="a" style="left:12.5px;top:22.3px;width:3px;height:3px;background:#c4c4c4"></div><div class="a" style="left:12.5px;top:28px;width:3px;height:3px;background:#c4c4c4"></div><div class="a" style="left:18px;top:11px;width:3px;height:3px;background:#c4c4c4"></div><div class="a" style="left:18px;top:16.7px;width:3px;height:3px;background:#c4c4c4"></div><div class="a" style="left:18px;top:22.3px;width:3px;height:3px;background:#c4c4c4"></div><div class="a" style="left:18px;top:28px;width:3px;height:3px;background:#c4c4c4"></div><div class="t" style="left:31px;top:14px;font-size:16px;color:#3c4043">日付</div></div>
<div class="a" style="left:370px;top:363px;width:230px;height:70px;background:#fff;border:1px dashed #c6c6c6;border-radius:4px"></div>
<div class="t" style="left:370px;top:376px;width:230px;text-align:center;font-size:16px;color:#5f6368">ディメンションをドロップ</div>
<div class="t" style="left:370px;top:400px;width:230px;text-align:center;font-size:16px;color:#5f6368">するか選択してください</div>
<div class="t" style="left:375px;top:461px;font-size:15px;color:#5f6368">最初の行</div>
<div class="t" style="left:510px;top:461px;font-size:18px;color:#202124">1</div>
<div class="a" style="left:508px;top:487px;width:87px;height:1px;background:#bdbdbd"></div>
<div class="t" style="left:375px;top:518px;font-size:15px;color:#5f6368">表示する行数</div>
<div class="a" style="left:375px;top:537px;width:90px;height:2px;background:repeating-linear-gradient(90deg,#9aa0a6 0 6px,transparent 6px 10.5px)"></div>
<div class="a" style="left:493px;top:501px;width:106px;height:50px;border:2px solid #1a73e8;border-radius:5px;background:#fff"></div>
<div class="t" style="left:506px;top:518px;font-size:17px;color:#202124">50</div>
<svg style="left:571px;top:524px" width="12" height="7"><path d="M0 0H12L6 6.5Z" fill="#1a73e8"/></svg>
<div class="t" style="left:375px;top:588px;font-size:15px;color:#5f6368">ネストされた行</div>
<div class="a" style="left:375px;top:606px;width:105px;height:2px;background:repeating-linear-gradient(90deg,#9aa0a6 0 6px,transparent 6px 10.5px)"></div>
<div class="a" style="left:493px;top:570px;width:106px;height:50px;border:1px solid #dadce0;border-radius:5px;background:#fff"></div>
<div class="t" style="left:506px;top:587px;font-size:17px;color:#202124">No</div>
<svg style="left:571px;top:593px" width="12" height="7"><path d="M0 0H12L6 6.5Z" fill="#5f6368"/></svg>
<div class="a" style="left:345px;top:647px;width:279px;height:1px;background:#e0e0e0"></div>
<div class="t" style="left:370px;top:671px;font-size:15px;color:#5f6368">列</div>
<div class="a" style="left:370px;top:701px;width:230px;height:70px;background:#fff;border:1px dashed #c6c6c6;border-radius:4px"></div>
<div class="t" style="left:370px;top:714px;width:230px;text-align:center;font-size:16px;color:#5f6368">ディメンションをドロップ</div>
<div class="t" style="left:370px;top:738px;width:230px;text-align:center;font-size:16px;color:#5f6368">するか選択してください</div>
<div class="t" style="left:375px;top:798px;font-size:15px;color:#5f6368">最初の列グループ</div>
<div class="t" style="left:510px;top:799px;font-size:18px;color:#202124">1</div>
<div class="a" style="left:508px;top:825px;width:87px;height:1px;background:#bdbdbd"></div>
<div class="t" style="left:375px;top:845px;font-size:15px;color:#5f6368">表示する列グル</div>
<div class="a" style="left:375px;top:864px;width:106px;height:2px;background:repeating-linear-gradient(90deg,#9aa0a6 0 6px,transparent 6px 10.5px)"></div>
<div class="t" style="left:375px;top:867px;font-size:15px;color:#5f6368">ープ数</div>
<div class="a" style="left:375px;top:886px;width:45px;height:2px;background:repeating-linear-gradient(90deg,#9aa0a6 0 6px,transparent 6px 10.5px)"></div>
<div class="a" style="left:493px;top:839px;width:106px;height:50px;border:1px solid #dadce0;border-radius:5px;background:#fff"></div>
<div class="t" style="left:506px;top:856px;font-size:17px;color:#202124">5</div>
<svg style="left:571px;top:862px" width="12" height="7"><path d="M0 0H12L6 6.5Z" fill="#5f6368"/></svg>
<div class="a" style="left:345px;top:915px;width:279px;height:1px;background:#e0e0e0"></div>
<div class="t" style="left:370px;top:938px;font-size:15px;color:#5f6368">値</div>
<div class="a" style="left:370px;top:970px;width:230px;height:40px;"><div class="a" style="left:0;top:0;width:230px;height:40px;background:#f6f6f6;border:1px solid #e2e2e2;border-left:3px solid #6d9eeb;border-radius:3px"></div><div class="a" style="left:12.5px;top:11px;width:3px;height:3px;background:#c4c4c4"></div><div class="a" style="left:12.5px;top:16.7px;width:3px;height:3px;background:#c4c4c4"></div><div class="a" style="left:12.5px;top:22.3px;width:3px;height:3px;background:#c4c4c4"></div><div class="a" style="left:12.5px;top:28px;width:3px;height:3px;background:#c4c4c4"></div><div class="a" style="left:18px;top:11px;width:3px;height:3px;background:#c4c4c4"></div><div class="a" style="left:18px;top:16.7px;width:3px;height:3px;background:#c4c4c4"></div><div class="a" style="left:18px;top:22.3px;width:3px;height:3px;background:#c4c4c4"></div><div class="a" style="left:18px;top:28px;width:3px;height:3px;background:#c4c4c4"></div><div class="t" style="left:31px;top:14px;font-size:16px;color:#3c4043">表示回数</div></div>
<div class="a" style="left:370px;top:1020px;width:230px;height:40px;"><div class="a" style="left:0;top:0;width:230px;height:40px;background:#f6f6f6;border:1px solid #e2e2e2;border-left:3px solid #6d9eeb;border-radius:3px"></div><div class="a" style="left:12.5px;top:11px;width:3px;height:3px;background:#c4c4c4"></div><div class="a" style="left:12.5px;top:16.7px;width:3px;height:3px;background:#c4c4c4"></div><div class="a" style="left:12.5px;top:22.3px;width:3px;height:3px;background:#c4c4c4"></div><div class="a" style="left:12.5px;top:28px;width:3px;height:3px;background:#c4c4c4"></div><div class="a" style="left:18px;top:11px;width:3px;height:3px;background:#c4c4c4"></div><div class="a" style="left:18px;top:16.7px;width:3px;height:3px;background:#c4c4c4"></div><div class="a" style="left:18px;top:22.3px;width:3px;height:3px;background:#c4c4c4"></div><div class="a" style="left:18px;top:28px;width:3px;height:3px;background:#c4c4c4"></div><div class="t" style="left:31px;top:14px;font-size:16px;color:#3c4043">セッション</div></div>
<div class="a" style="left:370px;top:1070px;width:230px;height:40px;"><div class="a" style="left:0;top:0;width:230px;height:40px;background:#f6f6f6;border:1px solid #e2e2e2;border-left:3px solid #6d9eeb;border-radius:3px"></div><div class="a" style="left:12.5px;top:11px;width:3px;height:3px;background:#c4c4c4"></div><div class="a" style="left:12.5px;top:16.7px;width:3px;height:3px;background:#c4c4c4"></div><div class="a" style="left:12.5px;top:22.3px;width:3px;height:3px;background:#c4c4c4"></div><div class="a" style="left:12.5px;top:28px;width:3px;height:3px;background:#c4c4c4"></div><div class="a" style="left:18px;top:11px;width:3px;height:3px;background:#c4c4c4"></div><div class="a" style="left:18px;top:16.7px;width:3px;height:3px;background:#c4c4c4"></div><div class="a" style="left:18px;top:22.3px;width:3px;height:3px;background:#c4c4c4"></div><div class="a" style="left:18px;top:28px;width:3px;height:3px;background:#c4c4c4"></div><div class="t" style="left:31px;top:14px;font-size:16px;color:#3c4043">アクティブ ユーザ...</div></div>
<div class="a" style="left:370px;top:1120px;width:230px;height:40px;"><div class="a" style="left:0;top:0;width:230px;height:40px;background:#f6f6f6;border:1px solid #e2e2e2;border-left:3px solid #6d9eeb;border-radius:3px"></div><div class="a" style="left:12.5px;top:11px;width:3px;height:3px;background:#c4c4c4"></div><div class="a" style="left:12.5px;top:16.7px;width:3px;height:3px;background:#c4c4c4"></div><div class="a" style="left:12.5px;top:22.3px;width:3px;height:3px;background:#c4c4c4"></div><div class="a" style="left:12.5px;top:28px;width:3px;height:3px;background:#c4c4c4"></div><div class="a" style="left:18px;top:11px;width:3px;height:3px;background:#c4c4c4"></div><div class="a" style="left:18px;top:16.7px;width:3px;height:3px;background:#c4c4c4"></div><div class="a" style="left:18px;top:22.3px;width:3px;height:3px;background:#c4c4c4"></div><div class="a" style="left:18px;top:28px;width:3px;height:3px;background:#c4c4c4"></div><div class="t" style="left:31px;top:14px;font-size:16px;color:#3c4043">新規ユーザー数</div></div>
<div class="a" style="left:370px;top:1170px;width:230px;height:40px;"><div class="a" style="left:0;top:0;width:230px;height:40px;background:#f6f6f6;border:1px solid #e2e2e2;border-left:3px solid #6d9eeb;border-radius:3px"></div><div class="a" style="left:12.5px;top:11px;width:3px;height:3px;background:#c4c4c4"></div><div class="a" style="left:12.5px;top:16.7px;width:3px;height:3px;background:#c4c4c4"></div><div class="a" style="left:12.5px;top:22.3px;width:3px;height:3px;background:#c4c4c4"></div><div class="a" style="left:12.5px;top:28px;width:3px;height:3px;background:#c4c4c4"></div><div class="a" style="left:18px;top:11px;width:3px;height:3px;background:#c4c4c4"></div><div class="a" style="left:18px;top:16.7px;width:3px;height:3px;background:#c4c4c4"></div><div class="a" style="left:18px;top:22.3px;width:3px;height:3px;background:#c4c4c4"></div><div class="a" style="left:18px;top:28px;width:3px;height:3px;background:#c4c4c4"></div><div class="t" style="left:31px;top:14px;font-size:16px;color:#3c4043">直帰率</div></div>
<div class="a" style="left:370px;top:1220px;width:230px;height:40px;"><div class="a" style="left:0;top:0;width:230px;height:40px;background:#f6f6f6;border:1px solid #e2e2e2;border-left:3px solid #6d9eeb;border-radius:3px"></div><div class="a" style="left:12.5px;top:11px;width:3px;height:3px;background:#c4c4c4"></div><div class="a" style="left:12.5px;top:16.7px;width:3px;height:3px;background:#c4c4c4"></div><div class="a" style="left:12.5px;top:22.3px;width:3px;height:3px;background:#c4c4c4"></div><div class="a" style="left:12.5px;top:28px;width:3px;height:3px;background:#c4c4c4"></div><div class="a" style="left:18px;top:11px;width:3px;height:3px;background:#c4c4c4"></div><div class="a" style="left:18px;top:16.7px;width:3px;height:3px;background:#c4c4c4"></div><div class="a" style="left:18px;top:22.3px;width:3px;height:3px;background:#c4c4c4"></div><div class="a" style="left:18px;top:28px;width:3px;height:3px;background:#c4c4c4"></div><div class="t" style="left:31px;top:14px;font-size:16px;color:#3c4043">コンバージョン</div></div>
<div class="a" style="left:370px;top:1270px;width:230px;height:40px;"><div class="a" style="left:0;top:0;width:230px;height:40px;background:#f6f6f6;border:1px solid #e2e2e2;border-left:3px solid #6d9eeb;border-radius:3px"></div><div class="a" style="left:12.5px;top:11px;width:3px;height:3px;background:#c4c4c4"></div><div class="a" style="left:12.5px;top:16.7px;width:3px;height:3px;background:#c4c4c4"></div><div class="a" style="left:12.5px;top:22.3px;width:3px;height:3px;background:#c4c4c4"></div><div class="a" style="left:12.5px;top:28px;width:3px;height:3px;background:#c4c4c4"></div><div class="a" style="left:18px;top:11px;width:3px;height:3px;background:#c4c4c4"></div><div class="a" style="left:18px;top:16.7px;width:3px;height:3px;background:#c4c4c4"></div><div class="a" style="left:18px;top:22.3px;width:3px;height:3px;background:#c4c4c4"></div><div class="a" style="left:18px;top:28px;width:3px;height:3px;background:#c4c4c4"></div><div class="t" style="left:31px;top:14px;font-size:16px;color:#3c4043">セッションのコン...</div></div>
<div class="a" style="left:370px;top:1320px;width:230px;height:70px;background:#fff;border:1px dashed #c6c6c6;border-radius:4px"></div>
<div class="t" style="left:370px;top:1333px;width:230px;text-align:center;font-size:16px;color:#5f6368">指標をドロップするか選択</div>
<div class="a" style="left:650.0px;top:82px;width:56.5px;height:52px;background:#f8f9fa;box-shadow:0 0 1.5px rgba(60,64,67,.28);border-radius:10px 10px 0 0"></div>
<div class="a" style="left:662.8px;top:92px;width:31px;height:31px;border-radius:50%;background:#5f6368"></div>
<div class="t" style="left:662.8px;top:97px;width:31px;text-align:center;font-size:17px;color:#fff">自</div>
<div class="a" style="left:706.25px;top:82px;width:56.5px;height:52px;background:#f8f9fa;box-shadow:0 0 1.5px rgba(60,64,67,.28);border-radius:10px 10px 0 0"></div>
<div class="a" style="left:719.05px;top:92px;width:31px;height:31px;border-radius:50%;background:#5f6368"></div>
<div class="t" style="left:719.05px;top:97px;width:31px;text-align:center;font-size:17px;color:#fff">自</div>
<div class="a" style="left:762.5px;top:82px;width:56.5px;height:52px;background:#f8f9fa;box-shadow:0 0 1.5px rgba(60,64,67,.28);border-radius:10px 10px 0 0"></div>
<div class="a" style="left:775.3px;top:92px;width:31px;height:31px;border-radius:50%;background:#5f6368"></div>
<div class="t" style="left:775.3px;top:97px;width:31px;text-align:center;font-size:17px;color:#fff">自</div>
<div class="a" style="left:818.75px;top:82px;width:56.5px;height:52px;background:#f8f9fa;box-shadow:0 0 1.5px rgba(60,64,67,.28);border-radius:10px 10px 0 0"></div>
<div class="a" style="left:831.55px;top:92px;width:31px;height:31px;border-radius:50%;background:#5f6368"></div>
<div class="t" style="left:831.55px;top:97px;width:31px;text-align:center;font-size:17px;color:#fff">フ</div>
<div class="a" style="left:875.0px;top:82px;width:56.5px;height:52px;background:#f8f9fa;box-shadow:0 0 1.5px rgba(60,64,67,.28);border-radius:10px 10px 0 0"></div>
<div class="a" style="left:887.8px;top:92px;width:31px;height:31px;border-radius:50%;background:#5f6368"></div>
<div class="t" style="left:887.8px;top:97px;width:31px;text-align:center;font-size:17px;color:#fff">自</div>
<div class="a" style="left:930px;top:82px;width:233px;height:53px;background:#fff;border-radius:10px 10px 0 0;box-shadow:0 0 1.5px rgba(60,64,67,.2)"></div>
<div class="a" style="left:944px;top:92px;width:31px;height:31px;border-radius:50%;background:#1a73e8"></div>
<svg style="left:0;top:0" width="1" height="1"><path d="M952.8 113.8L953 109.6L963.8 98.8Q965.6 97.2 967.3 98.8L968 99.5Q969.6 101.2 968 103L957.1 113.8Z" fill="none" stroke="#fff" stroke-width="1.7" stroke-linejoin="round"/></svg>
<div class="t" style="left:988px;top:99px;font-size:17px;color:#202124">自由形式 <b style="font-weight:bold">5</b></div>
<svg style="left:1131px;top:104px" width="13" height="7"><path d="M0 0H13L6.5 7Z" fill="#3c4043"/></svg>
<div class="a" style="left:1163px;top:82px;width:62px;height:52px;background:#f8f9fa;box-shadow:0 0 1.5px rgba(60,64,67,.3);border-radius:10px 10px 3px 3px"></div>
<div class="a" style="left:1184px;top:107px;width:20px;height:2px;background:#5f6368"></div>
<div class="a" style="left:1193px;top:98px;width:2px;height:20px;background:#5f6368"></div>
<svg style="left:0;top:0" width="1" height="1"><path d="M1922 92.6L1915.5 98.8L1922 104.9M1916 98.8H1928.4A5.35 5.35 0 0 1 1928.4 109.5H1918" fill="none" stroke="#5f6368" stroke-width="2.2"/><path d="M1972 92.6L1978.5 98.8L1972 104.9M1978 98.8H1965.9A5.35 5.35 0 0 0 1965.9 109.5H1976" fill="none" stroke="#9aa0a6" stroke-width="2.2"/><circle cx="2009.9" cy="97" r="4.3" fill="none" stroke="#5f6368" stroke-width="2.4"/><path d="M2000.3 111.5V109.5C2000.3 106 2005 103.8 2009.9 103.8S2019.5 106 2019.5 109.5V111.5Z" fill="none" stroke="#5f6368" stroke-width="2.4"/><path d="M2016.8 92.5A5.5 5.5 0 0 1 2016.8 101.5" fill="none" stroke="#5f6368" stroke-width="2.2"/><path d="M2021.5 105C2023 106.3 2023.5 107.6 2023.5 109V112" fill="none" stroke="#5f6368" stroke-width="2.2"/><path d="M2022.3 99.6H2030.3M2026.3 95.6V103.6" stroke="#5f6368" stroke-width="2.4"/></svg>
<div class="a" style="left:2043px;top:85px;width:75px;height:35px;border:1px solid #dadce0;border-radius:18px"></div>
<svg style="left:2052px;top:91px" width="24" height="22" viewBox="0 0 24 22"><path d="M12 2L22.5 20.5H1.5Z" fill="none" stroke="#b75509" stroke-width="2.2" stroke-linejoin="miter"/><rect x="11" y="9" width="2" height="5" fill="#b75509"/><rect x="11" y="15.5" width="2" height="2" fill="#b75509"/></svg>
<svg style="left:2092px;top:100px" width="10" height="6"><path d="M0 0H10L5 5.5Z" fill="#5f6368"/></svg>
<div class="a" style="left:650px;top:134px;width:1468px;height:1189px;background:#fff;box-shadow:0 1px 2px rgba(60,64,67,.3),0 1px 3px 1px rgba(60,64,67,.15)"></div>
<div class="a" style="left:2106px;top:135px;width:12px;height:879px;background:#cbcbcb;border-left:1px solid #b5b5b5"></div>
<div class="a" style="left:832px;top:134px;width:1px;height:1170px;background:#e3e3e3"></div>
<div class="a" style="left:1002px;top:134px;width:1px;height:1170px;background:#e3e3e3"></div>
<div class="a" style="left:1172px;top:134px;width:1px;height:1170px;background:#e3e3e3"></div>
<div class="a" style="left:1357px;top:134px;width:1px;height:1170px;background:#e3e3e3"></div>
<div class="a" style="left:1542px;top:134px;width:1px;height:1170px;background:#e3e3e3"></div>
<div class="a" style="left:1712px;top:134px;width:1px;height:1170px;background:#e3e3e3"></div>
<div class="a" style="left:1897px;top:134px;width:1px;height:1170px;background:#e3e3e3"></div>
<div class="a" style="left:650px;top:203px;width:1448px;height:1px;background:#e3e3e3"></div>
<div class="a" style="left:650px;top:284px;width:1448px;height:2px;background:#ebebeb"></div>
<svg style="left:669px;top:151px" width="12" height="11"><path d="M6 1V11M1.5 5.5L6 1L10.5 5.5" fill="none" stroke="#3c4043" stroke-width="1.4"/></svg>
<div class="t" style="left:712.5px;top:150px;font-size:17px;color:#5f6368">日付</div>
<div class="t" style="left:682px;top:150px;width:300.5px;text-align:right;font-size:17px;letter-spacing:0.5px;color:#5f6368">表示回数</div>
<div class="t" style="left:852px;top:150px;width:300.5px;text-align:right;font-size:17px;letter-spacing:0.5px;color:#5f6368">セッション</div>
<div class="t" style="left:1037px;top:150px;width:300.5px;text-align:right;font-size:17px;letter-spacing:0.5px;color:#5f6368">アクティブ</div>
<div class="t" style="left:1037px;top:175px;width:300.5px;text-align:right;font-size:17px;letter-spacing:0.5px;color:#5f6368">ユーザー数</div>
<div class="t" style="left:1222px;top:150px;width:300.5px;text-align:right;font-size:17px;letter-spacing:0.5px;color:#5f6368">新規ユーザー数</div>
<div class="t" style="left:1392px;top:150px;width:300.5px;text-align:right;font-size:17px;letter-spacing:0.5px;color:#5f6368">直帰率</div>
<div class="t" style="left:1577px;top:150px;width:300.5px;text-align:right;font-size:17px;letter-spacing:0.5px;color:#5f6368">コンバージョン</div>
<div class="t" style="left:1761px;top:150px;width:300.5px;text-align:right;font-size:17px;letter-spacing:0.5px;color:#5f6368">セッションのコ</div>
<div class="t" style="left:1761px;top:175px;width:300.5px;text-align:right;font-size:17px;letter-spacing:0.5px;color:#5f6368">ンバージョン率</div>
<div class="t" style="left:733px;top:238.5px;font-size:17.3px;color:#202124">合計</div>
<div class="t" style="left:682px;top:224.6px;width:300px;text-align:right;font-size:16.4px;font-weight:bold;color:#202124">381,376</div>
<div class="t" style="left:682px;top:252px;width:300px;text-align:right;font-size:13.4px;color:#202124">全体の 100%</div>
<div class="t" style="left:852px;top:224.6px;width:300px;text-align:right;font-size:16.4px;font-weight:bold;color:#202124">103,418</div>
<div class="t" style="left:852px;top:252px;width:300px;text-align:right;font-size:13.4px;color:#202124">全体の 100%</div>
<div class="t" style="left:1037px;top:224.6px;width:300px;text-align:right;font-size:16.4px;font-weight:bold;color:#202124">71,220</div>
<div class="t" style="left:1037px;top:252px;width:300px;text-align:right;font-size:13.4px;color:#202124">全体の 100%</div>
<div class="t" style="left:1222px;top:224.6px;width:300px;text-align:right;font-size:16.4px;font-weight:bold;color:#202124">58,190</div>
<div class="t" style="left:1222px;top:252px;width:300px;text-align:right;font-size:13.4px;color:#202124">全体の 100%</div>
<div class="t" style="left:1392px;top:224.6px;width:300px;text-align:right;font-size:16.4px;font-weight:bold;color:#202124">12.79%</div>
<div class="t" style="left:1392px;top:252px;width:300px;text-align:right;font-size:13.4px;color:#202124">平均との差 0%</div>
<div class="t" style="left:1577px;top:224.6px;width:300px;text-align:right;font-size:16.4px;font-weight:bold;color:#202124">552,915</div>
<div class="t" style="left:1577px;top:252px;width:300px;text-align:right;font-size:13.4px;color:#202124">全体の 100%</div>
<div class="t" style="left:1761px;top:224.6px;width:300px;text-align:right;font-size:16.4px;font-weight:bold;color:#202124">91.06%</div>
<div class="t" style="left:1761px;top:252px;width:300px;text-align:right;font-size:13.4px;color:#202124">全体の 100%</div>
<div class="t" style="left:687.5px;top:302px;font-size:17px;color:#202124">1</div>
<div class="t" style="left:733px;top:301.5px;font-size:17.5px;color:#202124">20230501</div>
<div class="a" style="left:834px;top:285px;width:96px;height:41px;background:#ebebeb"></div>
<div class="a" style="left:834px;top:326px;width:96px;height:3px;background:#4285f4"></div>
<div class="t" style="left:782px;top:300.5px;width:200px;text-align:right;font-size:16px;color:#202124">13,037</div>
<div class="a" style="left:1003px;top:285px;width:133px;height:41px;background:#ebebeb"></div>
<div class="a" style="left:1003px;top:326px;width:133px;height:3px;background:#4285f4"></div>
<div class="t" style="left:952px;top:300.5px;width:200px;text-align:right;font-size:16px;color:#202124">3,655</div>
<div class="a" style="left:1173px;top:285px;width:142px;height:41px;background:#ebebeb"></div>
<div class="a" style="left:1173px;top:326px;width:142px;height:3px;background:#4285f4"></div>
<div class="t" style="left:1137px;top:300.5px;width:200px;text-align:right;font-size:16px;color:#202124">2,926</div>
<div class="a" style="left:1358px;top:285px;width:150px;height:41px;background:#ebebeb"></div>
<div class="a" style="left:1358px;top:326px;width:150px;height:3px;background:#4285f4"></div>
<div class="t" style="left:1322px;top:300.5px;width:200px;text-align:right;font-size:16px;color:#202124">2,012</div>
<div class="a" style="left:1543px;top:285px;width:98px;height:41px;background:#ebebeb"></div>
<div class="a" style="left:1543px;top:326px;width:98px;height:3px;background:#4285f4"></div>
<div class="t" style="left:1492px;top:300.5px;width:200px;text-align:right;font-size:16px;color:#202124">12.89%</div>
<div class="a" style="left:1713px;top:285px;width:126px;height:41px;background:#ebebeb"></div>
<div class="a" style="left:1713px;top:326px;width:126px;height:3px;background:#4285f4"></div>
<div class="t" style="left:1677px;top:300.5px;width:200px;text-align:right;font-size:16px;color:#202124">19,449</div>
<div class="a" style="left:1898px;top:285px;width:191px;height:41px;background:#ebebeb"></div>
<div class="a" style="left:1898px;top:326px;width:191px;height:3px;background:#4285f4"></div>
<div class="t" style="left:1861px;top:300.5px;width:200px;text-align:right;font-size:16px;color:#202124">90.18%</div>
<div class="a" style="left:650px;top:329px;width:1448px;height:1px;background:#ebebeb"></div>
<div class="t" style="left:687.5px;top:347px;font-size:17px;color:#202124">2</div>
<div class="t" style="left:733px;top:346.5px;font-size:17.5px;color:#202124">20230502</div>
<div class="a" style="left:834px;top:330px;width:124px;height:41px;background:#ebebeb"></div>
<div class="a" style="left:834px;top:371px;width:124px;height:3px;background:#4285f4"></div>
<div class="t" style="left:782px;top:345.5px;width:200px;text-align:right;font-size:16px;color:#202124">16,825</div>
<div class="a" style="left:1003px;top:330px;width:168px;height:41px;background:#ebebeb"></div>
<div class="a" style="left:1003px;top:371px;width:168px;height:3px;background:#4285f4"></div>
<div class="t" style="left:952px;top:345.5px;width:200px;text-align:right;font-size:16px;color:#202124">4,624</div>
<div class="a" style="left:1173px;top:330px;width:179px;height:41px;background:#ebebeb"></div>
<div class="a" style="left:1173px;top:371px;width:179px;height:3px;background:#4285f4"></div>
<div class="t" style="left:1137px;top:345.5px;width:200px;text-align:right;font-size:16px;color:#202124">3,688</div>
<div class="a" style="left:1358px;top:330px;width:168px;height:41px;background:#ebebeb"></div>
<div class="a" style="left:1358px;top:371px;width:168px;height:3px;background:#4285f4"></div>
<div class="t" style="left:1322px;top:345.5px;width:200px;text-align:right;font-size:16px;color:#202124">2,252</div>
<div class="a" style="left:1543px;top:330px;width:169px;height:41px;background:#ebebeb"></div>
<div class="a" style="left:1543px;top:371px;width:169px;height:3px;background:#4285f4"></div>
<div class="t" style="left:1492px;top:345.5px;width:200px;text-align:right;font-size:16px;color:#202124">22.17%</div>
<div class="a" style="left:1713px;top:330px;width:163px;height:41px;background:#ebebeb"></div>
<div class="a" style="left:1713px;top:371px;width:163px;height:3px;background:#4285f4"></div>
<div class="t" style="left:1677px;top:345.5px;width:200px;text-align:right;font-size:16px;color:#202124">25,126</div>
<div class="a" style="left:1898px;top:330px;width:188px;height:41px;background:#ebebeb"></div>
<div class="a" style="left:1898px;top:371px;width:188px;height:3px;background:#4285f4"></div>
<div class="t" style="left:1861px;top:345.5px;width:200px;text-align:right;font-size:16px;color:#202124">88.99%</div>
<div class="a" style="left:650px;top:374px;width:1448px;height:1px;background:#ebebeb"></div>
<div class="t" style="left:687.5px;top:392px;font-size:17px;color:#202124">3</div>
<div class="t" style="left:733px;top:391.5px;font-size:17.5px;color:#202124">20230503</div>
<div class="a" style="left:834px;top:375px;width:105px;height:41px;background:#ebebeb"></div>
<div class="a" style="left:834px;top:416px;width:105px;height:3px;background:#4285f4"></div>
<div class="t" style="left:782px;top:390.5px;width:200px;text-align:right;font-size:16px;color:#202124">14,210</div>
<div class="a" style="left:1003px;top:375px;width:142px;height:41px;background:#ebebeb"></div>
<div class="a" style="left:1003px;top:416px;width:142px;height:3px;background:#4285f4"></div>
<div class="t" style="left:952px;top:390.5px;width:200px;text-align:right;font-size:16px;color:#202124">3,903</div>
<div class="a" style="left:1173px;top:375px;width:152px;height:41px;background:#ebebeb"></div>
<div class="a" style="left:1173px;top:416px;width:152px;height:3px;background:#4285f4"></div>
<div class="t" style="left:1137px;top:390.5px;width:200px;text-align:right;font-size:16px;color:#202124">3,134</div>
<div class="a" style="left:1358px;top:375px;width:156px;height:41px;background:#ebebeb"></div>
<div class="a" style="left:1358px;top:416px;width:156px;height:3px;background:#4285f4"></div>
<div class="t" style="left:1322px;top:390.5px;width:200px;text-align:right;font-size:16px;color:#202124">2,086</div>
<div class="a" style="left:1543px;top:375px;width:120px;height:41px;background:#ebebeb"></div>
<div class="a" style="left:1543px;top:416px;width:120px;height:3px;background:#4285f4"></div>
<div class="t" style="left:1492px;top:390.5px;width:200px;text-align:right;font-size:16px;color:#202124">15.76%</div>
<div class="a" style="left:1713px;top:375px;width:137px;height:41px;background:#ebebeb"></div>
<div class="a" style="left:1713px;top:416px;width:137px;height:3px;background:#4285f4"></div>
<div class="t" style="left:1677px;top:390.5px;width:200px;text-align:right;font-size:16px;color:#202124">21,139</div>
<div class="a" style="left:1898px;top:375px;width:189px;height:41px;background:#ebebeb"></div>
<div class="a" style="left:1898px;top:416px;width:189px;height:3px;background:#4285f4"></div>
<div class="t" style="left:1861px;top:390.5px;width:200px;text-align:right;font-size:16px;color:#202124">89.26%</div>
<div class="a" style="left:650px;top:419px;width:1448px;height:1px;background:#ebebeb"></div>
<div class="t" style="left:687.5px;top:437px;font-size:17px;color:#202124">4</div>
<div class="t" style="left:733px;top:436.5px;font-size:17.5px;color:#202124">20230504</div>
<div class="a" style="left:834px;top:420px;width:96px;height:41px;background:#ebebeb"></div>
<div class="a" style="left:834px;top:461px;width:96px;height:3px;background:#4285f4"></div>
<div class="t" style="left:782px;top:435.5px;width:200px;text-align:right;font-size:16px;color:#202124">13,064</div>
<div class="a" style="left:1003px;top:420px;width:130px;height:41px;background:#ebebeb"></div>
<div class="a" style="left:1003px;top:461px;width:130px;height:3px;background:#4285f4"></div>
<div class="t" style="left:952px;top:435.5px;width:200px;text-align:right;font-size:16px;color:#202124">3,566</div>
<div class="a" style="left:1173px;top:420px;width:139px;height:41px;background:#ebebeb"></div>
<div class="a" style="left:1173px;top:461px;width:139px;height:3px;background:#4285f4"></div>
<div class="t" style="left:1137px;top:435.5px;width:200px;text-align:right;font-size:16px;color:#202124">2,863</div>
<div class="a" style="left:1358px;top:420px;width:144px;height:41px;background:#ebebeb"></div>
<div class="a" style="left:1358px;top:461px;width:144px;height:3px;background:#4285f4"></div>
<div class="t" style="left:1322px;top:435.5px;width:200px;text-align:right;font-size:16px;color:#202124">1,938</div>
<div class="a" style="left:1543px;top:420px;width:104px;height:41px;background:#ebebeb"></div>
<div class="a" style="left:1543px;top:461px;width:104px;height:3px;background:#4285f4"></div>
<div class="t" style="left:1492px;top:435.5px;width:200px;text-align:right;font-size:16px;color:#202124">13.74%</div>
<div class="a" style="left:1713px;top:420px;width:131px;height:41px;background:#ebebeb"></div>
<div class="a" style="left:1713px;top:461px;width:131px;height:3px;background:#4285f4"></div>
<div class="t" style="left:1677px;top:435.5px;width:200px;text-align:right;font-size:16px;color:#202124">20,242</div>
<div class="a" style="left:1898px;top:420px;width:191px;height:41px;background:#ebebeb"></div>
<div class="a" style="left:1898px;top:461px;width:191px;height:3px;background:#4285f4"></div>
<div class="t" style="left:1861px;top:435.5px;width:200px;text-align:right;font-size:16px;color:#202124">90.16%</div>
<div class="a" style="left:650px;top:464px;width:1448px;height:1px;background:#ebebeb"></div>
<div class="t" style="left:687.5px;top:482px;font-size:17px;color:#202124">5</div>
<div class="t" style="left:733px;top:481.5px;font-size:17.5px;color:#202124">20230505</div>
<div class="a" style="left:834px;top:465px;width:92px;height:41px;background:#ebebeb"></div>
<div class="a" style="left:834px;top:506px;width:92px;height:3px;background:#4285f4"></div>
<div class="t" style="left:782px;top:480.5px;width:200px;text-align:right;font-size:16px;color:#202124">12,428</div>
<div class="a" style="left:1003px;top:465px;width:123px;height:41px;background:#ebebeb"></div>
<div class="a" style="left:1003px;top:506px;width:123px;height:3px;background:#4285f4"></div>
<div class="t" style="left:952px;top:480.5px;width:200px;text-align:right;font-size:16px;color:#202124">3,372</div>
<div class="a" style="left:1173px;top:465px;width:137px;height:41px;background:#ebebeb"></div>
<div class="a" style="left:1173px;top:506px;width:137px;height:3px;background:#4285f4"></div>
<div class="t" style="left:1137px;top:480.5px;width:200px;text-align:right;font-size:16px;color:#202124">2,826</div>
<div class="a" style="left:1358px;top:465px;width:148px;height:41px;background:#ebebeb"></div>
<div class="a" style="left:1358px;top:506px;width:148px;height:3px;background:#4285f4"></div>
<div class="t" style="left:1322px;top:480.5px;width:200px;text-align:right;font-size:16px;color:#202124">1,991</div>
<div class="a" style="left:1543px;top:465px;width:74px;height:41px;background:#ebebeb"></div>
<div class="a" style="left:1543px;top:506px;width:74px;height:3px;background:#4285f4"></div>
<div class="t" style="left:1492px;top:480.5px;width:200px;text-align:right;font-size:16px;color:#202124">9.79%</div>
<div class="a" style="left:1713px;top:465px;width:126px;height:41px;background:#ebebeb"></div>
<div class="a" style="left:1713px;top:506px;width:126px;height:3px;background:#4285f4"></div>
<div class="t" style="left:1677px;top:480.5px;width:200px;text-align:right;font-size:16px;color:#202124">19,472</div>
<div class="a" style="left:1898px;top:465px;width:197px;height:41px;background:#ebebeb"></div>
<div class="a" style="left:1898px;top:506px;width:197px;height:3px;background:#4285f4"></div>
<div class="t" style="left:1861px;top:480.5px;width:200px;text-align:right;font-size:16px;color:#202124">92.85%</div>
<div class="a" style="left:650px;top:509px;width:1448px;height:1px;background:#ebebeb"></div>
<div class="t" style="left:687.5px;top:527px;font-size:17px;color:#202124">6</div>
<div class="t" style="left:733px;top:526.5px;font-size:17.5px;color:#202124">20230506</div>
<div class="a" style="left:834px;top:510px;width:57px;height:41px;background:#ebebeb"></div>
<div class="a" style="left:834px;top:551px;width:57px;height:3px;background:#4285f4"></div>
<div class="t" style="left:782px;top:525.5px;width:200px;text-align:right;font-size:16px;color:#202124">7,766</div>
<div class="a" style="left:1003px;top:510px;width:93px;height:41px;background:#ebebeb"></div>
<div class="a" style="left:1003px;top:551px;width:93px;height:3px;background:#4285f4"></div>
<div class="t" style="left:952px;top:525.5px;width:200px;text-align:right;font-size:16px;color:#202124">2,550</div>
<div class="a" style="left:1173px;top:510px;width:108px;height:41px;background:#ebebeb"></div>
<div class="a" style="left:1173px;top:551px;width:108px;height:3px;background:#4285f4"></div>
<div class="t" style="left:1137px;top:525.5px;width:200px;text-align:right;font-size:16px;color:#202124">2,216</div>
<div class="a" style="left:1358px;top:510px;width:123px;height:41px;background:#ebebeb"></div>
<div class="a" style="left:1358px;top:551px;width:123px;height:3px;background:#4285f4"></div>
<div class="t" style="left:1322px;top:525.5px;width:200px;text-align:right;font-size:16px;color:#202124">1,654</div>
<div class="a" style="left:1543px;top:510px;width:64px;height:41px;background:#ebebeb"></div>
<div class="a" style="left:1543px;top:551px;width:64px;height:3px;background:#4285f4"></div>
<div class="t" style="left:1492px;top:525.5px;width:200px;text-align:right;font-size:16px;color:#202124">8.39%</div>
<div class="a" style="left:1713px;top:510px;width:79px;height:41px;background:#ebebeb"></div>
<div class="a" style="left:1713px;top:551px;width:79px;height:3px;background:#4285f4"></div>
<div class="t" style="left:1677px;top:525.5px;width:200px;text-align:right;font-size:16px;color:#202124">12,197</div>
<div class="a" style="left:1898px;top:510px;width:201px;height:41px;background:#ebebeb"></div>
<div class="a" style="left:1898px;top:551px;width:201px;height:3px;background:#4285f4"></div>
<div class="t" style="left:1861px;top:525.5px;width:200px;text-align:right;font-size:16px;color:#202124">94.75%</div>
<div class="a" style="left:650px;top:554px;width:1448px;height:1px;background:#ebebeb"></div>
<div class="t" style="left:687.5px;top:572px;font-size:17px;color:#202124">7</div>
<div class="t" style="left:733px;top:571.5px;font-size:17.5px;color:#202124">20230507</div>
<div class="a" style="left:834px;top:555px;width:60px;height:41px;background:#ebebeb"></div>
<div class="a" style="left:834px;top:596px;width:60px;height:3px;background:#4285f4"></div>
<div class="t" style="left:782px;top:570.5px;width:200px;text-align:right;font-size:16px;color:#202124">8,161</div>
<div class="a" style="left:1003px;top:555px;width:101px;height:41px;background:#ebebeb"></div>
<div class="a" style="left:1003px;top:596px;width:101px;height:3px;background:#4285f4"></div>
<div class="t" style="left:952px;top:570.5px;width:200px;text-align:right;font-size:16px;color:#202124">2,769</div>
<div class="a" style="left:1173px;top:555px;width:115px;height:41px;background:#ebebeb"></div>
<div class="a" style="left:1173px;top:596px;width:115px;height:3px;background:#4285f4"></div>
<div class="t" style="left:1137px;top:570.5px;width:200px;text-align:right;font-size:16px;color:#202124">2,375</div>
<div class="a" style="left:1358px;top:555px;width:132px;height:41px;background:#ebebeb"></div>
<div class="a" style="left:1358px;top:596px;width:132px;height:3px;background:#4285f4"></div>
<div class="t" style="left:1322px;top:570.5px;width:200px;text-align:right;font-size:16px;color:#202124">1,771</div>
<div class="a" style="left:1543px;top:555px;width:74px;height:41px;background:#ebebeb"></div>
<div class="a" style="left:1543px;top:596px;width:74px;height:3px;background:#4285f4"></div>
<div class="t" style="left:1492px;top:570.5px;width:200px;text-align:right;font-size:16px;color:#202124">9.71%</div>
<div class="a" style="left:1713px;top:555px;width:88px;height:41px;background:#ebebeb"></div>
<div class="a" style="left:1713px;top:596px;width:88px;height:3px;background:#4285f4"></div>
<div class="t" style="left:1677px;top:570.5px;width:200px;text-align:right;font-size:16px;color:#202124">13,566</div>
<div class="a" style="left:1898px;top:555px;width:196px;height:41px;background:#ebebeb"></div>
<div class="a" style="left:1898px;top:596px;width:196px;height:3px;background:#4285f4"></div>
<div class="t" style="left:1861px;top:570.5px;width:200px;text-align:right;font-size:16px;color:#202124">92.45%</div>
<div class="a" style="left:650px;top:599px;width:1448px;height:1px;background:#ebebeb"></div>
<div class="t" style="left:687.5px;top:617px;font-size:17px;color:#202124">8</div>
<div class="t" style="left:733px;top:616.5px;font-size:17.5px;color:#202124">20230508</div>
<div class="a" style="left:834px;top:600px;width:119px;height:41px;background:#ebebeb"></div>
<div class="a" style="left:834px;top:641px;width:119px;height:3px;background:#4285f4"></div>
<div class="t" style="left:782px;top:615.5px;width:200px;text-align:right;font-size:16px;color:#202124">16,198</div>
<div class="a" style="left:1003px;top:600px;width:157px;height:41px;background:#ebebeb"></div>
<div class="a" style="left:1003px;top:641px;width:157px;height:3px;background:#4285f4"></div>
<div class="t" style="left:952px;top:615.5px;width:200px;text-align:right;font-size:16px;color:#202124">4,324</div>
<div class="a" style="left:1173px;top:600px;width:172px;height:41px;background:#ebebeb"></div>
<div class="a" style="left:1173px;top:641px;width:172px;height:3px;background:#4285f4"></div>
<div class="t" style="left:1137px;top:615.5px;width:200px;text-align:right;font-size:16px;color:#202124">3,537</div>
<div class="a" style="left:1358px;top:600px;width:184px;height:41px;background:#ebebeb"></div>
<div class="a" style="left:1358px;top:641px;width:184px;height:3px;background:#4285f4"></div>
<div class="t" style="left:1322px;top:615.5px;width:200px;text-align:right;font-size:16px;color:#202124">2,471</div>
<div class="a" style="left:1543px;top:600px;width:93px;height:41px;background:#ebebeb"></div>
<div class="a" style="left:1543px;top:641px;width:93px;height:3px;background:#4285f4"></div>
<div class="t" style="left:1492px;top:615.5px;width:200px;text-align:right;font-size:16px;color:#202124">12.26%</div>
<div class="a" style="left:1713px;top:600px;width:159px;height:41px;background:#ebebeb"></div>
<div class="a" style="left:1713px;top:641px;width:159px;height:3px;background:#4285f4"></div>
<div class="t" style="left:1677px;top:615.5px;width:200px;text-align:right;font-size:16px;color:#202124">24,480</div>
<div class="a" style="left:1898px;top:600px;width:191px;height:41px;background:#ebebeb"></div>
<div class="a" style="left:1898px;top:641px;width:191px;height:3px;background:#4285f4"></div>
<div class="t" style="left:1861px;top:615.5px;width:200px;text-align:right;font-size:16px;color:#202124">90.22%</div>
<div class="a" style="left:650px;top:644px;width:1448px;height:1px;background:#ebebeb"></div>
<div class="t" style="left:687.5px;top:662px;font-size:17px;color:#202124">9</div>
<div class="t" style="left:733px;top:661.5px;font-size:17.5px;color:#202124">20230509</div>
<div class="a" style="left:834px;top:645px;width:109px;height:41px;background:#ebebeb"></div>
<div class="a" style="left:834px;top:686px;width:109px;height:3px;background:#4285f4"></div>
<div class="t" style="left:782px;top:660.5px;width:200px;text-align:right;font-size:16px;color:#202124">14,860</div>
<div class="a" style="left:1003px;top:645px;width:145px;height:41px;background:#ebebeb"></div>
<div class="a" style="left:1003px;top:686px;width:145px;height:3px;background:#4285f4"></div>
<div class="t" style="left:952px;top:660.5px;width:200px;text-align:right;font-size:16px;color:#202124">3,984</div>
<div class="a" style="left:1173px;top:645px;width:160px;height:41px;background:#ebebeb"></div>
<div class="a" style="left:1173px;top:686px;width:160px;height:3px;background:#4285f4"></div>
<div class="t" style="left:1137px;top:660.5px;width:200px;text-align:right;font-size:16px;color:#202124">3,307</div>
<div class="a" style="left:1358px;top:645px;width:167px;height:41px;background:#ebebeb"></div>
<div class="a" style="left:1358px;top:686px;width:167px;height:3px;background:#4285f4"></div>
<div class="t" style="left:1322px;top:660.5px;width:200px;text-align:right;font-size:16px;color:#202124">2,237</div>
<div class="a" style="left:1543px;top:645px;width:96px;height:41px;background:#ebebeb"></div>
<div class="a" style="left:1543px;top:686px;width:96px;height:3px;background:#4285f4"></div>
<div class="t" style="left:1492px;top:660.5px;width:200px;text-align:right;font-size:16px;color:#202124">12.65%</div>
<div class="a" style="left:1713px;top:645px;width:148px;height:41px;background:#ebebeb"></div>
<div class="a" style="left:1713px;top:686px;width:148px;height:3px;background:#4285f4"></div>
<div class="t" style="left:1677px;top:660.5px;width:200px;text-align:right;font-size:16px;color:#202124">22,783</div>
<div class="a" style="left:1898px;top:645px;width:192px;height:41px;background:#ebebeb"></div>
<div class="a" style="left:1898px;top:686px;width:192px;height:3px;background:#4285f4"></div>
<div class="t" style="left:1861px;top:660.5px;width:200px;text-align:right;font-size:16px;color:#202124">90.86%</div>
<div class="a" style="left:650px;top:689px;width:1448px;height:1px;background:#ebebeb"></div>
<div class="t" style="left:687.5px;top:707px;font-size:17px;color:#202124">10</div>
<div class="t" style="left:733px;top:706.5px;font-size:17.5px;color:#202124">20230510</div>
<div class="a" style="left:834px;top:690px;width:136px;height:41px;background:#ebebeb"></div>
<div class="a" style="left:834px;top:731px;width:136px;height:3px;background:#4285f4"></div>
<div class="t" style="left:782px;top:705.5px;width:200px;text-align:right;font-size:16px;color:#202124">18,428</div>
<div class="a" style="left:1003px;top:690px;width:169px;height:41px;background:#ebebeb"></div>
<div class="a" style="left:1003px;top:731px;width:169px;height:3px;background:#4285f4"></div>
<div class="t" style="left:952px;top:705.5px;width:200px;text-align:right;font-size:16px;color:#202124">4,641</div>
<div class="a" style="left:1173px;top:690px;width:183px;height:41px;background:#ebebeb"></div>
<div class="a" style="left:1173px;top:731px;width:183px;height:3px;background:#4285f4"></div>
<div class="t" style="left:1137px;top:705.5px;width:200px;text-align:right;font-size:16px;color:#202124">3,772</div>
<div class="a" style="left:1358px;top:690px;width:180px;height:41px;background:#ebebeb"></div>
<div class="a" style="left:1358px;top:731px;width:180px;height:3px;background:#4285f4"></div>
<div class="t" style="left:1322px;top:705.5px;width:200px;text-align:right;font-size:16px;color:#202124">2,415</div>
<div class="a" style="left:1543px;top:690px;width:117px;height:41px;background:#ebebeb"></div>
<div class="a" style="left:1543px;top:731px;width:117px;height:3px;background:#4285f4"></div>
<div class="t" style="left:1492px;top:705.5px;width:200px;text-align:right;font-size:16px;color:#202124">15.41%</div>
<div class="a" style="left:1713px;top:690px;width:184px;height:41px;background:#ebebeb"></div>
<div class="a" style="left:1713px;top:731px;width:184px;height:3px;background:#4285f4"></div>
<div class="t" style="left:1677px;top:705.5px;width:200px;text-align:right;font-size:16px;color:#202124">28,418</div>
<div class="a" style="left:1898px;top:690px;width:193px;height:41px;background:#ebebeb"></div>
<div class="a" style="left:1898px;top:731px;width:193px;height:3px;background:#4285f4"></div>
<div class="t" style="left:1861px;top:705.5px;width:200px;text-align:right;font-size:16px;color:#202124">91.23%</div>
<div class="a" style="left:650px;top:734px;width:1448px;height:1px;background:#ebebeb"></div>
<div class="t" style="left:687.5px;top:752px;font-size:17px;color:#202124">11</div>
<div class="t" style="left:733px;top:751.5px;font-size:17.5px;color:#202124">20230511</div>
<div class="a" style="left:834px;top:735px;width:120px;height:41px;background:#ebebeb"></div>
<div class="a" style="left:834px;top:776px;width:120px;height:3px;background:#4285f4"></div>
<div class="t" style="left:782px;top:750.5px;width:200px;text-align:right;font-size:16px;color:#202124">16,237</div>
<div class="a" style="left:1003px;top:735px;width:164px;height:41px;background:#ebebeb"></div>
<div class="a" style="left:1003px;top:776px;width:164px;height:3px;background:#4285f4"></div>
<div class="t" style="left:952px;top:750.5px;width:200px;text-align:right;font-size:16px;color:#202124">4,499</div>
<div class="a" style="left:1173px;top:735px;width:174px;height:41px;background:#ebebeb"></div>
<div class="a" style="left:1173px;top:776px;width:174px;height:3px;background:#4285f4"></div>
<div class="t" style="left:1137px;top:750.5px;width:200px;text-align:right;font-size:16px;color:#202124">3,588</div>
<div class="a" style="left:1358px;top:735px;width:181px;height:41px;background:#ebebeb"></div>
<div class="a" style="left:1358px;top:776px;width:181px;height:3px;background:#4285f4"></div>
<div class="t" style="left:1322px;top:750.5px;width:200px;text-align:right;font-size:16px;color:#202124">2,426</div>
<div class="a" style="left:1543px;top:735px;width:106px;height:41px;background:#ebebeb"></div>
<div class="a" style="left:1543px;top:776px;width:106px;height:3px;background:#4285f4"></div>
<div class="t" style="left:1492px;top:750.5px;width:200px;text-align:right;font-size:16px;color:#202124">13.91%</div>
<div class="a" style="left:1713px;top:735px;width:158px;height:41px;background:#ebebeb"></div>
<div class="a" style="left:1713px;top:776px;width:158px;height:3px;background:#4285f4"></div>
<div class="t" style="left:1677px;top:750.5px;width:200px;text-align:right;font-size:16px;color:#202124">24,381</div>
<div class="a" style="left:1898px;top:735px;width:189px;height:41px;background:#ebebeb"></div>
<div class="a" style="left:1898px;top:776px;width:189px;height:3px;background:#4285f4"></div>
<div class="t" style="left:1861px;top:750.5px;width:200px;text-align:right;font-size:16px;color:#202124">89.44%</div>
<div class="a" style="left:650px;top:779px;width:1448px;height:1px;background:#ebebeb"></div>
<div class="t" style="left:687.5px;top:797px;font-size:17px;color:#202124">12</div>
<div class="t" style="left:733px;top:796.5px;font-size:17.5px;color:#202124">20230512</div>
<div class="a" style="left:834px;top:780px;width:86px;height:41px;background:#ebebeb"></div>
<div class="a" style="left:834px;top:821px;width:86px;height:3px;background:#4285f4"></div>
<div class="t" style="left:782px;top:795.5px;width:200px;text-align:right;font-size:16px;color:#202124">11,665</div>
<div class="a" style="left:1003px;top:780px;width:115px;height:41px;background:#ebebeb"></div>
<div class="a" style="left:1003px;top:821px;width:115px;height:3px;background:#4285f4"></div>
<div class="t" style="left:952px;top:795.5px;width:200px;text-align:right;font-size:16px;color:#202124">3,163</div>
<div class="a" style="left:1173px;top:780px;width:125px;height:41px;background:#ebebeb"></div>
<div class="a" style="left:1173px;top:821px;width:125px;height:3px;background:#4285f4"></div>
<div class="t" style="left:1137px;top:795.5px;width:200px;text-align:right;font-size:16px;color:#202124">2,572</div>
<div class="a" style="left:1358px;top:780px;width:126px;height:41px;background:#ebebeb"></div>
<div class="a" style="left:1358px;top:821px;width:126px;height:3px;background:#4285f4"></div>
<div class="t" style="left:1322px;top:795.5px;width:200px;text-align:right;font-size:16px;color:#202124">1,695</div>
<div class="a" style="left:1543px;top:780px;width:112px;height:41px;background:#ebebeb"></div>
<div class="a" style="left:1543px;top:821px;width:112px;height:3px;background:#4285f4"></div>
<div class="t" style="left:1492px;top:795.5px;width:200px;text-align:right;font-size:16px;color:#202124">14.73%</div>
<div class="a" style="left:1713px;top:780px;width:118px;height:41px;background:#ebebeb"></div>
<div class="a" style="left:1713px;top:821px;width:118px;height:3px;background:#4285f4"></div>
<div class="t" style="left:1677px;top:795.5px;width:200px;text-align:right;font-size:16px;color:#202124">18,274</div>
<div class="a" style="left:1898px;top:780px;width:189px;height:41px;background:#ebebeb"></div>
<div class="a" style="left:1898px;top:821px;width:189px;height:3px;background:#4285f4"></div>
<div class="t" style="left:1861px;top:795.5px;width:200px;text-align:right;font-size:16px;color:#202124">89.47%</div>
<div class="a" style="left:650px;top:824px;width:1448px;height:1px;background:#ebebeb"></div>
<div class="t" style="left:687.5px;top:842px;font-size:17px;color:#202124">13</div>
<div class="t" style="left:733px;top:841.5px;font-size:17.5px;color:#202124">20230513</div>
<div class="a" style="left:834px;top:825px;width:57px;height:41px;background:#ebebeb"></div>
<div class="a" style="left:834px;top:866px;width:57px;height:3px;background:#4285f4"></div>
<div class="t" style="left:782px;top:840.5px;width:200px;text-align:right;font-size:16px;color:#202124">7,796</div>
<div class="a" style="left:1003px;top:825px;width:77px;height:41px;background:#ebebeb"></div>
<div class="a" style="left:1003px;top:866px;width:77px;height:3px;background:#4285f4"></div>
<div class="t" style="left:952px;top:840.5px;width:200px;text-align:right;font-size:16px;color:#202124">2,106</div>
<div class="a" style="left:1173px;top:825px;width:86px;height:41px;background:#ebebeb"></div>
<div class="a" style="left:1173px;top:866px;width:86px;height:3px;background:#4285f4"></div>
<div class="t" style="left:1137px;top:840.5px;width:200px;text-align:right;font-size:16px;color:#202124">1,782</div>
<div class="a" style="left:1358px;top:825px;width:94px;height:41px;background:#ebebeb"></div>
<div class="a" style="left:1358px;top:866px;width:94px;height:3px;background:#4285f4"></div>
<div class="t" style="left:1322px;top:840.5px;width:200px;text-align:right;font-size:16px;color:#202124">1,261</div>
<div class="a" style="left:1543px;top:825px;width:88px;height:41px;background:#ebebeb"></div>
<div class="a" style="left:1543px;top:866px;width:88px;height:3px;background:#4285f4"></div>
<div class="t" style="left:1492px;top:840.5px;width:200px;text-align:right;font-size:16px;color:#202124">11.63%</div>
<div class="a" style="left:1713px;top:825px;width:88px;height:41px;background:#ebebeb"></div>
<div class="a" style="left:1713px;top:866px;width:88px;height:3px;background:#4285f4"></div>
<div class="t" style="left:1677px;top:840.5px;width:200px;text-align:right;font-size:16px;color:#202124">13,631</div>
<div class="a" style="left:1898px;top:825px;width:197px;height:41px;background:#ebebeb"></div>
<div class="a" style="left:1898px;top:866px;width:197px;height:3px;background:#4285f4"></div>
<div class="t" style="left:1861px;top:840.5px;width:200px;text-align:right;font-size:16px;color:#202124">93.07%</div>
<div class="a" style="left:650px;top:869px;width:1448px;height:1px;background:#ebebeb"></div>
<div class="t" style="left:687.5px;top:887px;font-size:17px;color:#202124">14</div>
<div class="t" style="left:733px;top:886.5px;font-size:17.5px;color:#202124">20230514</div>
<div class="a" style="left:834px;top:870px;width:59px;height:41px;background:#ebebeb"></div>
<div class="a" style="left:834px;top:911px;width:59px;height:3px;background:#4285f4"></div>
<div class="t" style="left:782px;top:885.5px;width:200px;text-align:right;font-size:16px;color:#202124">8,048</div>
<div class="a" style="left:1003px;top:870px;width:86px;height:41px;background:#ebebeb"></div>
<div class="a" style="left:1003px;top:911px;width:86px;height:3px;background:#4285f4"></div>
<div class="t" style="left:952px;top:885.5px;width:200px;text-align:right;font-size:16px;color:#202124">2,365</div>
<div class="a" style="left:1173px;top:870px;width:100px;height:41px;background:#ebebeb"></div>
<div class="a" style="left:1173px;top:911px;width:100px;height:3px;background:#4285f4"></div>
<div class="t" style="left:1137px;top:885.5px;width:200px;text-align:right;font-size:16px;color:#202124">2,067</div>
<div class="a" style="left:1358px;top:870px;width:109px;height:41px;background:#ebebeb"></div>
<div class="a" style="left:1358px;top:911px;width:109px;height:3px;background:#4285f4"></div>
<div class="t" style="left:1322px;top:885.5px;width:200px;text-align:right;font-size:16px;color:#202124">1,456</div>
<div class="a" style="left:1543px;top:870px;width:83px;height:41px;background:#ebebeb"></div>
<div class="a" style="left:1543px;top:911px;width:83px;height:3px;background:#4285f4"></div>
<div class="t" style="left:1492px;top:885.5px;width:200px;text-align:right;font-size:16px;color:#202124">10.87%</div>
<div class="a" style="left:1713px;top:870px;width:89px;height:41px;background:#ebebeb"></div>
<div class="a" style="left:1713px;top:911px;width:89px;height:3px;background:#4285f4"></div>
<div class="t" style="left:1677px;top:885.5px;width:200px;text-align:right;font-size:16px;color:#202124">13,669</div>
<div class="a" style="left:1898px;top:870px;width:198px;height:41px;background:#ebebeb"></div>
<div class="a" style="left:1898px;top:911px;width:198px;height:3px;background:#4285f4"></div>
<div class="t" style="left:1861px;top:885.5px;width:200px;text-align:right;font-size:16px;color:#202124">93.4%</div>
<div class="a" style="left:650px;top:914px;width:1448px;height:1px;background:#ebebeb"></div>
<div class="t" style="left:687.5px;top:932px;font-size:17px;color:#202124">15</div>
<div class="t" style="left:733px;top:931.5px;font-size:17.5px;color:#202124">20230515</div>
<div class="a" style="left:834px;top:915px;width:105px;height:41px;background:#ebebeb"></div>
<div class="a" style="left:834px;top:956px;width:105px;height:3px;background:#4285f4"></div>
<div class="t" style="left:782px;top:930.5px;width:200px;text-align:right;font-size:16px;color:#202124">14,242</div>
<div class="a" style="left:1003px;top:915px;width:142px;height:41px;background:#ebebeb"></div>
<div class="a" style="left:1003px;top:956px;width:142px;height:3px;background:#4285f4"></div>
<div class="t" style="left:952px;top:930.5px;width:200px;text-align:right;font-size:16px;color:#202124">3,889</div>
<div class="a" style="left:1173px;top:915px;width:149px;height:41px;background:#ebebeb"></div>
<div class="a" style="left:1173px;top:956px;width:149px;height:3px;background:#4285f4"></div>
<div class="t" style="left:1137px;top:930.5px;width:200px;text-align:right;font-size:16px;color:#202124">3,075</div>
<div class="a" style="left:1358px;top:915px;width:147px;height:41px;background:#ebebeb"></div>
<div class="a" style="left:1358px;top:956px;width:147px;height:3px;background:#4285f4"></div>
<div class="t" style="left:1322px;top:930.5px;width:200px;text-align:right;font-size:16px;color:#202124">1,976</div>
<div class="a" style="left:1543px;top:915px;width:117px;height:41px;background:#ebebeb"></div>
<div class="a" style="left:1543px;top:956px;width:117px;height:3px;background:#4285f4"></div>
<div class="t" style="left:1492px;top:930.5px;width:200px;text-align:right;font-size:16px;color:#202124">15.35%</div>
<div class="a" style="left:1713px;top:915px;width:141px;height:41px;background:#ebebeb"></div>
<div class="a" style="left:1713px;top:956px;width:141px;height:3px;background:#4285f4"></div>
<div class="t" style="left:1677px;top:930.5px;width:200px;text-align:right;font-size:16px;color:#202124">21,816</div>
<div class="a" style="left:1898px;top:915px;width:189px;height:41px;background:#ebebeb"></div>
<div class="a" style="left:1898px;top:956px;width:189px;height:3px;background:#4285f4"></div>
<div class="t" style="left:1861px;top:930.5px;width:200px;text-align:right;font-size:16px;color:#202124">89.02%</div>
<div class="a" style="left:650px;top:959px;width:1448px;height:1px;background:#ebebeb"></div>
<div class="t" style="left:687.5px;top:977px;font-size:17px;color:#202124">16</div>
<div class="t" style="left:733px;top:976.5px;font-size:17.5px;color:#202124">20230516</div>
<div class="a" style="left:834px;top:960px;width:96px;height:41px;background:#ebebeb"></div>
<div class="a" style="left:834px;top:1001px;width:96px;height:3px;background:#4285f4"></div>
<div class="t" style="left:782px;top:975.5px;width:200px;text-align:right;font-size:16px;color:#202124">13,074</div>
<div class="a" style="left:1003px;top:960px;width:131px;height:41px;background:#ebebeb"></div>
<div class="a" style="left:1003px;top:1001px;width:131px;height:3px;background:#4285f4"></div>
<div class="t" style="left:952px;top:975.5px;width:200px;text-align:right;font-size:16px;color:#202124">3,603</div>
<div class="a" style="left:1173px;top:960px;width:141px;height:41px;background:#ebebeb"></div>
<div class="a" style="left:1173px;top:1001px;width:141px;height:3px;background:#4285f4"></div>
<div class="t" style="left:1137px;top:975.5px;width:200px;text-align:right;font-size:16px;color:#202124">2,904</div>
<div class="a" style="left:1358px;top:960px;width:143px;height:41px;background:#ebebeb"></div>
<div class="a" style="left:1358px;top:1001px;width:143px;height:3px;background:#4285f4"></div>
<div class="t" style="left:1322px;top:975.5px;width:200px;text-align:right;font-size:16px;color:#202124">1,919</div>
<div class="a" style="left:1543px;top:960px;width:109px;height:41px;background:#ebebeb"></div>
<div class="a" style="left:1543px;top:1001px;width:109px;height:3px;background:#4285f4"></div>
<div class="t" style="left:1492px;top:975.5px;width:200px;text-align:right;font-size:16px;color:#202124">14.35%</div>
<div class="a" style="left:1713px;top:960px;width:134px;height:41px;background:#ebebeb"></div>
<div class="a" style="left:1713px;top:1001px;width:134px;height:3px;background:#4285f4"></div>
<div class="t" style="left:1677px;top:975.5px;width:200px;text-align:right;font-size:16px;color:#202124">20,758</div>
<div class="a" style="left:1898px;top:960px;width:190px;height:41px;background:#ebebeb"></div>
<div class="a" style="left:1898px;top:1001px;width:190px;height:3px;background:#4285f4"></div>
<div class="t" style="left:1861px;top:975.5px;width:200px;text-align:right;font-size:16px;color:#202124">89.65%</div>
<div class="a" style="left:650px;top:1004px;width:1448px;height:1px;background:#ebebeb"></div>
<div class="t" style="left:687.5px;top:1022px;font-size:17px;color:#202124">17</div>
<div class="t" style="left:733px;top:1021.5px;font-size:17.5px;color:#202124">20230517</div>
<div class="a" style="left:834px;top:1005px;width:103px;height:41px;background:#ebebeb"></div>
<div class="a" style="left:834px;top:1046px;width:103px;height:3px;background:#4285f4"></div>
<div class="t" style="left:782px;top:1020.5px;width:200px;text-align:right;font-size:16px;color:#202124">14,000</div>
<div class="a" style="left:1003px;top:1005px;width:138px;height:41px;background:#ebebeb"></div>
<div class="a" style="left:1003px;top:1046px;width:138px;height:3px;background:#4285f4"></div>
<div class="t" style="left:952px;top:1020.5px;width:200px;text-align:right;font-size:16px;color:#202124">3,789</div>
<div class="a" style="left:1173px;top:1005px;width:147px;height:41px;background:#ebebeb"></div>
<div class="a" style="left:1173px;top:1046px;width:147px;height:3px;background:#4285f4"></div>
<div class="t" style="left:1137px;top:1020.5px;width:200px;text-align:right;font-size:16px;color:#202124">3,025</div>
<div class="a" style="left:1358px;top:1005px;width:148px;height:41px;background:#ebebeb"></div>
<div class="a" style="left:1358px;top:1046px;width:148px;height:3px;background:#4285f4"></div>
<div class="t" style="left:1322px;top:1020.5px;width:200px;text-align:right;font-size:16px;color:#202124">1,979</div>
<div class="a" style="left:1543px;top:1005px;width:110px;height:41px;background:#ebebeb"></div>
<div class="a" style="left:1543px;top:1046px;width:110px;height:3px;background:#4285f4"></div>
<div class="t" style="left:1492px;top:1020.5px;width:200px;text-align:right;font-size:16px;color:#202124">14.49%</div>
<div class="a" style="left:1713px;top:1005px;width:141px;height:41px;background:#ebebeb"></div>
<div class="a" style="left:1713px;top:1046px;width:141px;height:3px;background:#4285f4"></div>
<div class="t" style="left:1677px;top:1020.5px;width:200px;text-align:right;font-size:16px;color:#202124">21,716</div>
<div class="a" style="left:1898px;top:1005px;width:189px;height:41px;background:#ebebeb"></div>
<div class="a" style="left:1898px;top:1046px;width:189px;height:3px;background:#4285f4"></div>
<div class="t" style="left:1861px;top:1020.5px;width:200px;text-align:right;font-size:16px;color:#202124">89.07%</div>
<div class="a" style="left:650px;top:1049px;width:1448px;height:1px;background:#ebebeb"></div>
<div class="t" style="left:687.5px;top:1067px;font-size:17px;color:#202124">18</div>
<div class="t" style="left:733px;top:1066.5px;font-size:17.5px;color:#202124">20230518</div>
<div class="a" style="left:834px;top:1050px;width:112px;height:41px;background:#ebebeb"></div>
<div class="a" style="left:834px;top:1091px;width:112px;height:3px;background:#4285f4"></div>
<div class="t" style="left:782px;top:1065.5px;width:200px;text-align:right;font-size:16px;color:#202124">15,233</div>
<div class="a" style="left:1003px;top:1050px;width:138px;height:41px;background:#ebebeb"></div>
<div class="a" style="left:1003px;top:1091px;width:138px;height:3px;background:#4285f4"></div>
<div class="t" style="left:952px;top:1065.5px;width:200px;text-align:right;font-size:16px;color:#202124">3,784</div>
<div class="a" style="left:1173px;top:1050px;width:145px;height:41px;background:#ebebeb"></div>
<div class="a" style="left:1173px;top:1091px;width:145px;height:3px;background:#4285f4"></div>
<div class="t" style="left:1137px;top:1065.5px;width:200px;text-align:right;font-size:16px;color:#202124">2,988</div>
<div class="a" style="left:1358px;top:1050px;width:148px;height:41px;background:#ebebeb"></div>
<div class="a" style="left:1358px;top:1091px;width:148px;height:3px;background:#4285f4"></div>
<div class="t" style="left:1322px;top:1065.5px;width:200px;text-align:right;font-size:16px;color:#202124">1,979</div>
<div class="a" style="left:1543px;top:1050px;width:111px;height:41px;background:#ebebeb"></div>
<div class="a" style="left:1543px;top:1091px;width:111px;height:3px;background:#4285f4"></div>
<div class="t" style="left:1492px;top:1065.5px;width:200px;text-align:right;font-size:16px;color:#202124">14.56%</div>
<div class="a" style="left:1713px;top:1050px;width:146px;height:41px;background:#ebebeb"></div>
<div class="a" style="left:1713px;top:1091px;width:146px;height:3px;background:#4285f4"></div>
<div class="t" style="left:1677px;top:1065.5px;width:200px;text-align:right;font-size:16px;color:#202124">22,501</div>
<div class="a" style="left:1898px;top:1050px;width:190px;height:41px;background:#ebebeb"></div>
<div class="a" style="left:1898px;top:1091px;width:190px;height:3px;background:#4285f4"></div>
<div class="t" style="left:1861px;top:1065.5px;width:200px;text-align:right;font-size:16px;color:#202124">89.64%</div>
<div class="a" style="left:650px;top:1094px;width:1448px;height:1px;background:#ebebeb"></div>
<div class="t" style="left:687.5px;top:1112px;font-size:17px;color:#202124">19</div>
<div class="t" style="left:733px;top:1111.5px;font-size:17.5px;color:#202124">20230519</div>
<div class="a" style="left:834px;top:1095px;width:89px;height:41px;background:#ebebeb"></div>
<div class="a" style="left:834px;top:1136px;width:89px;height:3px;background:#4285f4"></div>
<div class="t" style="left:782px;top:1110.5px;width:200px;text-align:right;font-size:16px;color:#202124">12,052</div>
<div class="a" style="left:1003px;top:1095px;width:110px;height:41px;background:#ebebeb"></div>
<div class="a" style="left:1003px;top:1136px;width:110px;height:3px;background:#4285f4"></div>
<div class="t" style="left:952px;top:1110.5px;width:200px;text-align:right;font-size:16px;color:#202124">3,013</div>
<div class="a" style="left:1173px;top:1095px;width:117px;height:41px;background:#ebebeb"></div>
<div class="a" style="left:1173px;top:1136px;width:117px;height:3px;background:#4285f4"></div>
<div class="t" style="left:1137px;top:1110.5px;width:200px;text-align:right;font-size:16px;color:#202124">2,403</div>
<div class="a" style="left:1358px;top:1095px;width:127px;height:41px;background:#ebebeb"></div>
<div class="a" style="left:1358px;top:1136px;width:127px;height:3px;background:#4285f4"></div>
<div class="t" style="left:1322px;top:1110.5px;width:200px;text-align:right;font-size:16px;color:#202124">1,702</div>
<div class="a" style="left:1543px;top:1095px;width:96px;height:41px;background:#ebebeb"></div>
<div class="a" style="left:1543px;top:1136px;width:96px;height:3px;background:#4285f4"></div>
<div class="t" style="left:1492px;top:1110.5px;width:200px;text-align:right;font-size:16px;color:#202124">12.58%</div>
<div class="a" style="left:1713px;top:1095px;width:96px;height:41px;background:#ebebeb"></div>
<div class="a" style="left:1713px;top:1136px;width:96px;height:3px;background:#4285f4"></div>
<div class="t" style="left:1677px;top:1110.5px;width:200px;text-align:right;font-size:16px;color:#202124">14,781</div>
<div class="a" style="left:1898px;top:1095px;width:194px;height:41px;background:#ebebeb"></div>
<div class="a" style="left:1898px;top:1136px;width:194px;height:3px;background:#4285f4"></div>
<div class="t" style="left:1861px;top:1110.5px;width:200px;text-align:right;font-size:16px;color:#202124">91.44%</div>
<div class="a" style="left:650px;top:1139px;width:1448px;height:1px;background:#ebebeb"></div>
<div class="t" style="left:687.5px;top:1157px;font-size:17px;color:#202124">20</div>
<div class="t" style="left:733px;top:1156.5px;font-size:17.5px;color:#202124">20230520</div>
<div class="a" style="left:834px;top:1140px;width:48px;height:41px;background:#ebebeb"></div>
<div class="a" style="left:834px;top:1181px;width:48px;height:3px;background:#4285f4"></div>
<div class="t" style="left:782px;top:1155.5px;width:200px;text-align:right;font-size:16px;color:#202124">6,568</div>
<div class="a" style="left:1003px;top:1140px;width:76px;height:41px;background:#ebebeb"></div>
<div class="a" style="left:1003px;top:1181px;width:76px;height:3px;background:#4285f4"></div>
<div class="t" style="left:952px;top:1155.5px;width:200px;text-align:right;font-size:16px;color:#202124">2,084</div>
<div class="a" style="left:1173px;top:1140px;width:82px;height:41px;background:#ebebeb"></div>
<div class="a" style="left:1173px;top:1181px;width:82px;height:3px;background:#4285f4"></div>
<div class="t" style="left:1137px;top:1155.5px;width:200px;text-align:right;font-size:16px;color:#202124">1,695</div>
<div class="a" style="left:1358px;top:1140px;width:101px;height:41px;background:#ebebeb"></div>
<div class="a" style="left:1358px;top:1181px;width:101px;height:3px;background:#4285f4"></div>
<div class="t" style="left:1322px;top:1155.5px;width:200px;text-align:right;font-size:16px;color:#202124">1,355</div>
<div class="a" style="left:1543px;top:1140px;width:88px;height:41px;background:#ebebeb"></div>
<div class="a" style="left:1543px;top:1181px;width:88px;height:3px;background:#4285f4"></div>
<div class="t" style="left:1492px;top:1155.5px;width:200px;text-align:right;font-size:16px;color:#202124">11.56%</div>
<div class="a" style="left:1713px;top:1140px;width:58px;height:41px;background:#ebebeb"></div>
<div class="a" style="left:1713px;top:1181px;width:58px;height:3px;background:#4285f4"></div>
<div class="t" style="left:1677px;top:1155.5px;width:200px;text-align:right;font-size:16px;color:#202124">9,008</div>
<div class="a" style="left:1898px;top:1140px;width:195px;height:41px;background:#ebebeb"></div>
<div class="a" style="left:1898px;top:1181px;width:195px;height:3px;background:#4285f4"></div>
<div class="t" style="left:1861px;top:1155.5px;width:200px;text-align:right;font-size:16px;color:#202124">91.84%</div>
<div class="a" style="left:650px;top:1184px;width:1448px;height:1px;background:#ebebeb"></div>
<div class="t" style="left:687.5px;top:1202px;font-size:17px;color:#202124">21</div>
<div class="t" style="left:733px;top:1201.5px;font-size:17.5px;color:#202124">20230521</div>
<div class="a" style="left:834px;top:1185px;width:52px;height:41px;background:#ebebeb"></div>
<div class="a" style="left:834px;top:1226px;width:52px;height:3px;background:#4285f4"></div>
<div class="t" style="left:782px;top:1200.5px;width:200px;text-align:right;font-size:16px;color:#202124">7,089</div>
<div class="a" style="left:1003px;top:1185px;width:77px;height:41px;background:#ebebeb"></div>
<div class="a" style="left:1003px;top:1226px;width:77px;height:3px;background:#4285f4"></div>
<div class="t" style="left:952px;top:1200.5px;width:200px;text-align:right;font-size:16px;color:#202124">2,123</div>
<div class="a" style="left:1173px;top:1185px;width:82px;height:41px;background:#ebebeb"></div>
<div class="a" style="left:1173px;top:1226px;width:82px;height:3px;background:#4285f4"></div>
<div class="t" style="left:1137px;top:1200.5px;width:200px;text-align:right;font-size:16px;color:#202124">1,698</div>
<div class="a" style="left:1358px;top:1185px;width:94px;height:41px;background:#ebebeb"></div>
<div class="a" style="left:1358px;top:1226px;width:94px;height:3px;background:#4285f4"></div>
<div class="t" style="left:1322px;top:1200.5px;width:200px;text-align:right;font-size:16px;color:#202124">1,267</div>
<div class="a" style="left:1543px;top:1185px;width:91px;height:41px;background:#ebebeb"></div>
<div class="a" style="left:1543px;top:1226px;width:91px;height:3px;background:#4285f4"></div>
<div class="t" style="left:1492px;top:1200.5px;width:200px;text-align:right;font-size:16px;color:#202124">11.96%</div>
<div class="a" style="left:1713px;top:1185px;width:64px;height:41px;background:#ebebeb"></div>
<div class="a" style="left:1713px;top:1226px;width:64px;height:3px;background:#4285f4"></div>
<div class="t" style="left:1677px;top:1200.5px;width:200px;text-align:right;font-size:16px;color:#202124">9,825</div>
<div class="a" style="left:1898px;top:1185px;width:195px;height:41px;background:#ebebeb"></div>
<div class="a" style="left:1898px;top:1226px;width:195px;height:3px;background:#4285f4"></div>
<div class="t" style="left:1861px;top:1200.5px;width:200px;text-align:right;font-size:16px;color:#202124">92.13%</div>
<div class="a" style="left:650px;top:1229px;width:1448px;height:1px;background:#ebebeb"></div>
<div class="t" style="left:687.5px;top:1247px;font-size:17px;color:#202124">22</div>
<div class="t" style="left:733px;top:1246.5px;font-size:17.5px;color:#202124">20230522</div>
<div class="a" style="left:834px;top:1230px;width:97px;height:41px;background:#ebebeb"></div>
<div class="a" style="left:834px;top:1271px;width:97px;height:3px;background:#4285f4"></div>
<div class="t" style="left:782px;top:1245.5px;width:200px;text-align:right;font-size:16px;color:#202124">13,131</div>
<div class="a" style="left:1003px;top:1230px;width:145px;height:41px;background:#ebebeb"></div>
<div class="a" style="left:1003px;top:1271px;width:145px;height:3px;background:#4285f4"></div>
<div class="t" style="left:952px;top:1245.5px;width:200px;text-align:right;font-size:16px;color:#202124">3,976</div>
<div class="a" style="left:1173px;top:1230px;width:144px;height:41px;background:#ebebeb"></div>
<div class="a" style="left:1173px;top:1271px;width:144px;height:3px;background:#4285f4"></div>
<div class="t" style="left:1137px;top:1245.5px;width:200px;text-align:right;font-size:16px;color:#202124">2,969</div>
<div class="a" style="left:1358px;top:1230px;width:158px;height:41px;background:#ebebeb"></div>
<div class="a" style="left:1358px;top:1271px;width:158px;height:3px;background:#4285f4"></div>
<div class="t" style="left:1322px;top:1245.5px;width:200px;text-align:right;font-size:16px;color:#202124">2,114</div>
<div class="a" style="left:1543px;top:1230px;width:111px;height:41px;background:#ebebeb"></div>
<div class="a" style="left:1543px;top:1271px;width:111px;height:3px;background:#4285f4"></div>
<div class="t" style="left:1492px;top:1245.5px;width:200px;text-align:right;font-size:16px;color:#202124">14.66%</div>
<div class="a" style="left:1713px;top:1230px;width:108px;height:41px;background:#ebebeb"></div>
<div class="a" style="left:1713px;top:1271px;width:108px;height:3px;background:#4285f4"></div>
<div class="t" style="left:1677px;top:1245.5px;width:200px;text-align:right;font-size:16px;color:#202124">16,720</div>
<div class="a" style="left:1898px;top:1230px;width:185px;height:41px;background:#ebebeb"></div>
<div class="a" style="left:1898px;top:1271px;width:185px;height:3px;background:#4285f4"></div>
<div class="t" style="left:1861px;top:1245.5px;width:200px;text-align:right;font-size:16px;color:#202124">87.42%</div>
<div class="a" style="left:650px;top:1274px;width:1448px;height:1px;background:#ebebeb"></div>
<div class="t" style="left:687.5px;top:1292px;font-size:17px;color:#202124">23</div>
<div class="t" style="left:733px;top:1291.5px;font-size:17.5px;color:#202124">20230523</div>
<div class="a" style="left:834px;top:1275px;width:109px;height:41px;background:#ebebeb"></div>
<div class="a" style="left:834px;top:1316px;width:109px;height:3px;background:#4285f4"></div>
<div class="t" style="left:782px;top:1290.5px;width:200px;text-align:right;font-size:16px;color:#202124">14,809</div>
<div class="a" style="left:1003px;top:1275px;width:154px;height:41px;background:#ebebeb"></div>
<div class="a" style="left:1003px;top:1316px;width:154px;height:3px;background:#4285f4"></div>
<div class="t" style="left:952px;top:1290.5px;width:200px;text-align:right;font-size:16px;color:#202124">4,239</div>
<div class="a" style="left:1173px;top:1275px;width:163px;height:41px;background:#ebebeb"></div>
<div class="a" style="left:1173px;top:1316px;width:163px;height:3px;background:#4285f4"></div>
<div class="t" style="left:1137px;top:1290.5px;width:200px;text-align:right;font-size:16px;color:#202124">3,353</div>
<div class="a" style="left:1358px;top:1275px;width:180px;height:41px;background:#ebebeb"></div>
<div class="a" style="left:1358px;top:1316px;width:180px;height:3px;background:#4285f4"></div>
<div class="t" style="left:1322px;top:1290.5px;width:200px;text-align:right;font-size:16px;color:#202124">2,415</div>
<div class="a" style="left:1543px;top:1275px;width:99px;height:41px;background:#ebebeb"></div>
<div class="a" style="left:1543px;top:1316px;width:99px;height:3px;background:#4285f4"></div>
<div class="t" style="left:1492px;top:1290.5px;width:200px;text-align:right;font-size:16px;color:#202124">13.07%</div>
<div class="a" style="left:1713px;top:1275px;width:120px;height:41px;background:#ebebeb"></div>
<div class="a" style="left:1713px;top:1316px;width:120px;height:3px;background:#4285f4"></div>
<div class="t" style="left:1677px;top:1290.5px;width:200px;text-align:right;font-size:16px;color:#202124">18,587</div>
<div class="a" style="left:1898px;top:1275px;width:192px;height:41px;background:#ebebeb"></div>
<div class="a" style="left:1898px;top:1316px;width:192px;height:3px;background:#4285f4"></div>
<div class="t" style="left:1861px;top:1290.5px;width:200px;text-align:right;font-size:16px;color:#202124">90.54%</div>
<div class="a" style="left:650px;top:1222px;width:1456px;height:80px;background:linear-gradient(rgba(255,255,255,0),#fff)"></div>
<div class="a" style="left:650px;top:1302px;width:1456px;height:21px;background:#fff"></div>
</body></html>
